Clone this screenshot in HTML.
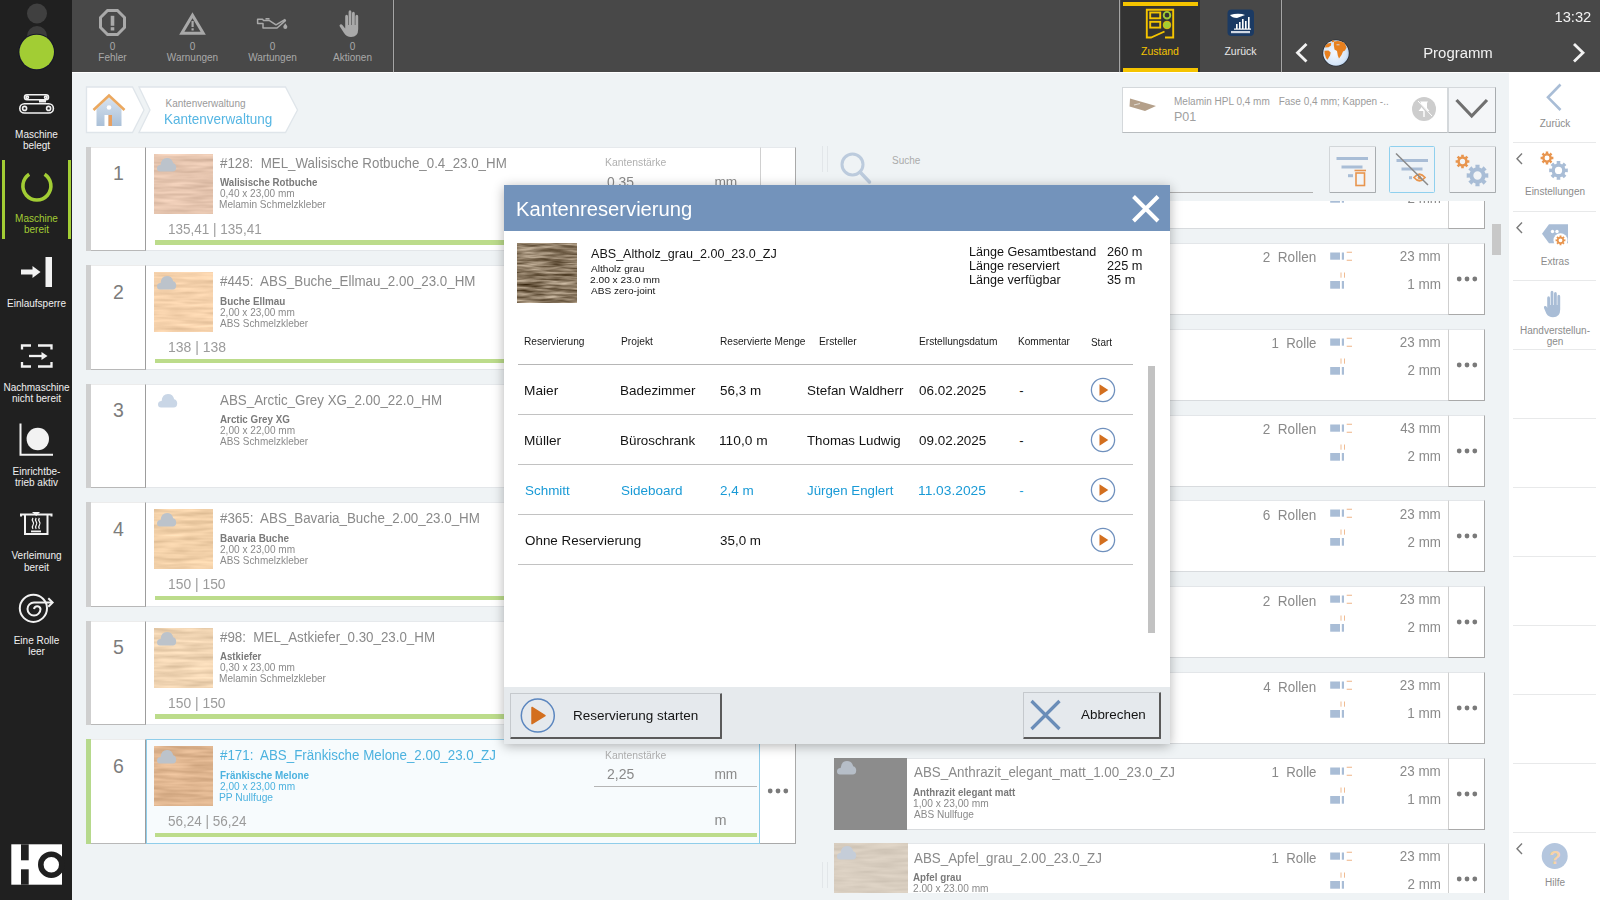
<!DOCTYPE html><html><head><meta charset="utf-8"><style>
html,body{margin:0;padding:0;width:1600px;height:900px;overflow:hidden;background:#eff3f5;}
body{position:relative;font-family:"Liberation Sans", sans-serif;}
.t{position:absolute;white-space:nowrap;}
svg{overflow:visible;}
</style></head><body>
<div style="position:absolute;left:72px;top:72px;width:1437px;height:828px;background:#eff3f5;"></div>
<div style="position:absolute;left:72px;top:72px;width:1437px;height:1px;background:#ffffff;"></div>
<div style="position:absolute;left:0px;top:0px;width:72px;height:900px;background:#202020;"></div>
<svg style="position:absolute;left:0px;top:0px;" width="72" height="75" viewBox="0 0 72 75">
<circle cx="37" cy="13.5" r="10" fill="#404040"/>
<circle cx="37" cy="36" r="10" fill="#3c3c3c"/>
<circle cx="36.7" cy="52" r="18.3" fill="#15152a"/>
<circle cx="36.7" cy="52" r="17.3" fill="#a2cd34"/>
</svg>
<svg style="position:absolute;left:0px;top:85px;" width="72" height="35" viewBox="0 0 72 35">
<g fill="none" stroke="#f2f2f2" stroke-width="1.6">
<rect x="24.5" y="9.8" width="24" height="5" rx="2.5"/>
<circle cx="27.3" cy="12.3" r="1.2"/><circle cx="45.7" cy="12.3" r="1.2"/>
<rect x="19.8" y="18.8" width="33.6" height="9.2" rx="4.6"/>
<circle cx="24.6" cy="23.4" r="2"/><circle cx="48.6" cy="23.4" r="2"/>
</g><rect x="39" y="14" width="7" height="3.5" fill="#f2f2f2"/>
</svg>
<div class="t" style="left:-163.50px;width:400px;text-align:center;top:130.03px;font-size:10px;line-height:10px;color:#f0f0f0;">Maschine</div>
<div class="t" style="left:-163.50px;width:400px;text-align:center;top:141.03px;font-size:10px;line-height:10px;color:#f0f0f0;">belegt</div>
<div style="position:absolute;left:1.8px;top:160px;width:3.3px;height:79.4px;background:#a2cd34;"></div>
<div style="position:absolute;left:67.8px;top:160px;width:3.1px;height:79.4px;background:#a2cd34;"></div>
<svg style="position:absolute;left:0px;top:150px;" width="72" height="60" viewBox="0 0 72 60">
<path d="M29.2 24.3 A14 14 0 1 0 44.6 24.3" fill="none" stroke="#a2cd34" stroke-width="3.6" stroke-linecap="butt"/>
</svg>
<div class="t" style="left:-163.50px;width:400px;text-align:center;top:213.94px;font-size:10px;line-height:10px;color:#a2cd34;">Maschine</div>
<div class="t" style="left:-163.50px;width:400px;text-align:center;top:225.34px;font-size:10px;line-height:10px;color:#a2cd34;">bereit</div>
<svg style="position:absolute;left:18px;top:254px;" width="38" height="36" viewBox="0 0 38 36">
<rect x="3" y="15.5" width="12.5" height="5" fill="#f2f2f2"/>
<path d="M14.5 12 L22.5 18 L14.5 24 Z" fill="#f2f2f2"/>
<rect x="27.5" y="3" width="6.5" height="30" fill="#f2f2f2"/>
</svg>
<div class="t" style="left:-163.50px;width:400px;text-align:center;top:298.54px;font-size:10px;line-height:10px;color:#f0f0f0;">Einlaufsperre</div>
<svg style="position:absolute;left:18px;top:342px;" width="38" height="28" viewBox="0 0 38 28">
<g fill="none" stroke="#f2f2f2" stroke-width="2.3">
<path d="M4 7.5 V3.5 H13"/><path d="M20 3.5 H33.5 V7.5"/>
<path d="M4 20 V24.5 H13"/><path d="M20 24.5 H33.5 V20"/>
<path d="M11 14 H26"/>
</g><path d="M23.5 10 L29.5 14 L23.5 18 Z" fill="#f2f2f2"/>
</svg>
<div class="t" style="left:-163.50px;width:400px;text-align:center;top:382.84px;font-size:10px;line-height:10px;color:#f0f0f0;">Nachmaschine</div>
<div class="t" style="left:-163.50px;width:400px;text-align:center;top:393.54px;font-size:10px;line-height:10px;color:#f0f0f0;">nicht bereit</div>
<svg style="position:absolute;left:18px;top:422px;" width="38" height="36" viewBox="0 0 38 36">
<path d="M2.5 1.5 V32.8 H35" fill="none" stroke="#f2f2f2" stroke-width="2"/>
<circle cx="19.8" cy="17" r="11.2" fill="#f2f2f2"/>
</svg>
<div class="t" style="left:-163.50px;width:400px;text-align:center;top:466.94px;font-size:10px;line-height:10px;color:#f0f0f0;">Einrichtbe-</div>
<div class="t" style="left:-163.50px;width:400px;text-align:center;top:478.24px;font-size:10px;line-height:10px;color:#f0f0f0;">trieb aktiv</div>
<svg style="position:absolute;left:0px;top:500px;" width="72" height="40" viewBox="0 0 72 40">
<g fill="none" stroke="#f2f2f2" stroke-width="2">
<path d="M21 16.5 V14.5 H51.5 V16.5"/><path d="M25 14.5 V34 H47.5 V14.5"/>
<path d="M33 18 q-1.4 1.8 0 3.6 q1.4 1.8 0 3.6 q-1.4 1.8 0 3.6" stroke-width="1.3"/>
<path d="M36.2 18 q-1.4 1.8 0 3.6 q1.4 1.8 0 3.6 q-1.4 1.8 0 3.6" stroke-width="1.3"/>
<path d="M39.4 18 q-1.4 1.8 0 3.6 q1.4 1.8 0 3.6 q-1.4 1.8 0 3.6" stroke-width="1.3"/>
</g>
<path d="M32 12 H40 L36.2 16 Z" fill="#f2f2f2"/>
<rect x="31" y="30.5" width="10" height="1.8" fill="#f2f2f2"/>
</svg>
<div class="t" style="left:-163.50px;width:400px;text-align:center;top:551.33px;font-size:10px;line-height:10px;color:#f0f0f0;">Verleimung</div>
<div class="t" style="left:-163.50px;width:400px;text-align:center;top:562.53px;font-size:10px;line-height:10px;color:#f0f0f0;">bereit</div>
<svg style="position:absolute;left:0px;top:572px;" width="72" height="60" viewBox="0 0 72 60">
<g fill="none" stroke="#f2f2f2" stroke-width="2">
<circle cx="33.4" cy="36.3" r="13.6"/>
<path d="M52 30.5 H34 A6.5 6.5 0 1 0 40.5 37 A3.3 3.3 0 0 0 34 37"/>
<path d="M48.3 26.3 L52.6 30.5 L48.3 34.7"/>
</g>
</svg>
<div class="t" style="left:-163.50px;width:400px;text-align:center;top:636.03px;font-size:10px;line-height:10px;color:#f0f0f0;">Eine Rolle</div>
<div class="t" style="left:-163.50px;width:400px;text-align:center;top:647.24px;font-size:10px;line-height:10px;color:#f0f0f0;">leer</div>
<svg style="position:absolute;left:0px;top:835px;" width="72" height="60" viewBox="0 0 72 60">
<rect x="11.3" y="9.3" width="50.7" height="40.4" fill="#ffffff"/>
<rect x="21" y="9.3" width="7.7" height="16" fill="#202020"/>
<rect x="21" y="34.3" width="7.7" height="15.4" fill="#202020"/>
<circle cx="51.3" cy="29.7" r="10.5" fill="none" stroke="#202020" stroke-width="5.6"/>
</svg>
<div style="position:absolute;left:72px;top:0px;width:1528px;height:72px;background:#484848;"></div>
<div style="position:absolute;left:392.5px;top:0px;width:1.3px;height:72px;background:#a5a5a5;box-shadow:0 0 1px #333;"></div>
<div style="position:absolute;left:1118.8px;top:0px;width:1.3px;height:72px;background:#a5a5a5;box-shadow:0 0 1px #333;"></div>
<div style="position:absolute;left:1281px;top:0px;width:1.3px;height:72px;background:#a5a5a5;box-shadow:0 0 1px #333;"></div>
<svg style="position:absolute;left:97px;top:7px;" width="31" height="31" viewBox="0 0 31 31">
<polygon points="20.47,3.5 27.5,10.53 27.5,20.47 20.47,27.5 10.53,27.5 3.5,20.47 3.5,10.53 10.53,3.5" fill="none" stroke="#a9a9a9" stroke-width="3"/>
<rect x="13.7" y="8.8" width="3.6" height="10" fill="#a9a9a9"/>
<rect x="13.7" y="20.2" width="3.6" height="3.3" fill="#a9a9a9"/>
</svg>
<div class="t" style="left:-87.50px;width:400px;text-align:center;top:41.53px;font-size:10px;line-height:10px;color:#a9a9a9;">0</div>
<div class="t" style="left:-87.50px;width:400px;text-align:center;top:52.53px;font-size:10px;line-height:10px;color:#a9a9a9;">Fehler</div>
<svg style="position:absolute;left:177px;top:9px;" width="32" height="29" viewBox="0 0 32 29">
<polygon points="15.5,6.2 26.2,24.2 4.8,24.2" fill="none" stroke="#a9a9a9" stroke-width="3" stroke-linejoin="miter"/>
<rect x="14.5" y="12" width="2.2" height="6" fill="#a9a9a9"/>
<rect x="14.5" y="19.3" width="2.2" height="2.2" fill="#a9a9a9"/>
</svg>
<div class="t" style="left:-7.50px;width:400px;text-align:center;top:41.53px;font-size:10px;line-height:10px;color:#a9a9a9;">0</div>
<div class="t" style="left:-7.50px;width:400px;text-align:center;top:52.53px;font-size:10px;line-height:10px;color:#a9a9a9;">Warnungen</div>
<svg style="position:absolute;left:255px;top:15px;" width="35" height="16" viewBox="0 0 35 16">
<path d="M2.6 4.2 H7.6 L8.6 5.6 H14.5 L21 9.8 L29.8 4.6 L30.4 5.6 L22 13 H8 V8.4 H2.6 Z" fill="none" stroke="#a9a9a9" stroke-width="1.5" stroke-linejoin="round"/>
<rect x="10.5" y="3" width="4" height="1.6" fill="#a9a9a9"/>
<path d="M30.3 8.3 q-2 2.6 -2 3.8 a2 2 0 0 0 4 0 q0 -1.2 -2 -3.8z" fill="#a9a9a9"/>
</svg>
<div class="t" style="left:72.50px;width:400px;text-align:center;top:41.53px;font-size:10px;line-height:10px;color:#a9a9a9;">0</div>
<div class="t" style="left:72.50px;width:400px;text-align:center;top:52.53px;font-size:10px;line-height:10px;color:#a9a9a9;">Wartungen</div>
<svg style="position:absolute;left:338px;top:8px;" width="27" height="31" viewBox="0 0 27 31">
<path d="M7.2 8.5 Q7.2 6.8 8.6 6.8 Q10 6.8 10 8.5 V17 H10.6 V4 Q10.6 2.2 12 2.2 Q13.4 2.2 13.4 4 V17 H14 V5.5 Q14 3.8 15.4 3.8 Q16.8 3.8 16.8 5.5 V17 H17.4 V8.5 Q17.4 6.8 18.8 6.8 Q20.2 6.8 20.2 8.5 V21 Q20.2 29 13 29 Q8.5 29 6 25 L1.8 18.5 Q1 17.2 2.2 16.5 Q3.4 15.8 4.4 17 L7.2 20.5 Z" fill="#a9a9a9"/>
</svg>
<div class="t" style="left:152.50px;width:400px;text-align:center;top:41.53px;font-size:10px;line-height:10px;color:#a9a9a9;">0</div>
<div class="t" style="left:152.50px;width:400px;text-align:center;top:52.53px;font-size:10px;line-height:10px;color:#a9a9a9;">Aktionen</div>
<div style="position:absolute;left:1120.5px;top:0px;width:79.5px;height:72px;background:#333333;"></div>
<div style="position:absolute;left:1123px;top:2px;width:75px;height:3.5px;background:#f5c400;"></div>
<div style="position:absolute;left:1123px;top:68px;width:75px;height:3.5px;background:#f5c400;"></div>
<svg style="position:absolute;left:1145px;top:8px;" width="30" height="31" viewBox="0 0 30 31">
<g fill="none" stroke="#f5c400" stroke-width="1.9">
<path d="M20 29.5 H28.2 V1.8 H1.8 V29.5 H6 L19.5 23.5"/>
<rect x="5.2" y="4.5" width="10" height="5.8"/>
<rect x="5.2" y="13.8" width="10" height="5.8"/>
<circle cx="22" cy="7.2" r="3.3" stroke="#a2cd34"/>
</g>
<circle cx="22" cy="17" r="3.8" fill="#a2cd34" stroke="#f5c400" stroke-width="0.8"/>
</svg>
<div class="t" style="left:960.00px;width:400px;text-align:center;top:46.41px;font-size:10.5px;line-height:10.5px;color:#f5c400;">Zustand</div>
<svg style="position:absolute;left:1227px;top:9px;" width="28" height="28" viewBox="0 0 28 28">
<rect x="0.5" y="0.5" width="26.5" height="26.5" rx="4" fill="#1b3a63"/>
<path d="M3 6 Q9 4 15 5 L18 6 L10 9 Q5 9 3 6z" fill="#ffffff"/>
<g fill="#ffffff"><rect x="9" y="15" width="1.6" height="5"/><rect x="12" y="13" width="1.6" height="7"/><rect x="15" y="10" width="1.6" height="10"/><rect x="18" y="12" width="1.6" height="8"/><rect x="21" y="8" width="1.6" height="12"/><rect x="7" y="19.5" width="17" height="1.2"/></g>
<rect x="4" y="22" width="19" height="2.2" fill="#d0d8e4"/>
</svg>
<div class="t" style="left:1040.50px;width:400px;text-align:center;top:46.41px;font-size:10.5px;line-height:10.5px;color:#e8e8e8;">Zurück</div>
<div class="t" style="right:8.70px;top:10.23px;font-size:14.5px;line-height:14.5px;color:#f2f2f2;transform:scaleX(1.0142);transform-origin:100% 0;">13:32</div>
<svg style="position:absolute;left:1294px;top:42px;" width="16" height="22" viewBox="0 0 16 22"><path d="M12.5 2 L3.5 10.8 L12.5 19.6" fill="none" stroke="#f2f2f2" stroke-width="2.8"/></svg>
<svg style="position:absolute;left:1571px;top:42px;" width="16" height="22" viewBox="0 0 16 22"><path d="M3 2 L12 10.8 L3 19.6" fill="none" stroke="#f2f2f2" stroke-width="2.8"/></svg>
<svg style="position:absolute;left:1321.5px;top:39px;" width="28" height="28" viewBox="0 0 28 28">
<defs><radialGradient id="gl" cx="0.45" cy="0.5" r="0.6"><stop offset="0" stop-color="#f4f8ff"/><stop offset="0.75" stop-color="#d6e6f8"/><stop offset="1" stop-color="#a9c6e8"/></radialGradient></defs>
<circle cx="14" cy="14" r="13.6" fill="#2a2f38"/>
<circle cx="14" cy="14" r="12.8" fill="url(#gl)"/>
<path d="M3.5 6.5 Q5.5 4 9.2 3.8 L9 6.5 L6.5 8.3 L3 8.6 Z" fill="#e8801e"/>
<path d="M9.8 1.5 L12.2 1.3 L11.8 3 L10 3.2 Z" fill="#e8801e"/>
<path d="M2.5 11.8 L6.5 11.5 L8.7 13.5 L8 16.5 L5.5 20.8 L4 19 L2.6 14.5 Z" fill="#e8801e"/>
<path d="M12 2.5 Q18 1.2 22.5 4 L24.5 8.5 L23 11.5 L21 12.5 L19.5 16 L17 19.5 L15.8 16.5 L15 12 L12.5 10.5 L11.8 6 Z" fill="#e8801e"/>
<path d="M14.5 5.8 L17.5 5.8" stroke="#cfe0f4" stroke-width="0.9"/>
</svg>
<div class="t" style="left:1257.50px;width:400px;text-align:center;top:45.18px;font-size:15.5px;line-height:15.5px;color:#f2f2f2;transform:scaleX(0.9624);transform-origin:50% 0;">Programm</div>
<svg style="position:absolute;left:84px;top:85px;" width="218" height="50" viewBox="0 0 218 50">
<path d="M2.5 2 H48.5 L60 25 L48.5 47.5 H2.5 Z" fill="#ffffff" stroke="#dfe5ea" stroke-width="1.3"/>
<path d="M55 2 H201.5 L213.5 25 L201.5 47.5 H55 L66 25 Z" fill="#ffffff" stroke="#dfe5ea" stroke-width="1.3"/>
<defs><linearGradient id="hw" x1="0" y1="0" x2="0" y2="1"><stop offset="0" stop-color="#d8e3ef"/><stop offset="1" stop-color="#aac0d8"/></linearGradient></defs>
<path d="M12.5 24 L25 12 L37.5 24 V41 H12.5 Z" fill="url(#hw)"/>
<path d="M9.5 25 L25 10.5 L40.5 25" fill="none" stroke="#eba85f" stroke-width="2.6"/>
<circle cx="25" cy="22.5" r="2.3" fill="#ffffff"/>
<rect x="20.5" y="30" width="4" height="11" fill="#ffffff"/>
<rect x="24.5" y="30" width="3.5" height="11" fill="#e8a060"/>
</svg>
<div class="t" style="left:165.50px;top:98.53px;font-size:10px;line-height:10px;color:#9a9a9a;">Kantenverwaltung</div>
<div class="t" style="left:164.42px;top:112.23px;font-size:14.5px;line-height:14.5px;color:#56b6e3;transform:scaleX(0.9321);transform-origin:0 0;">Kantenverwaltung</div>
<div style="position:absolute;left:1122px;top:87px;width:326px;height:45.5px;background:#ffffff;box-sizing:border-box;border:1px solid #d4d8db;border-bottom:1.5px solid #b8bcbf;"></div>
<div style="position:absolute;left:1448px;top:87px;width:47.5px;height:45.5px;background:#f4f6f8;box-sizing:border-box;border:1px solid #d4d8db;border-bottom:1.5px solid #a8acaf;border-right:1.5px solid #a8acaf;"></div>
<svg style="position:absolute;left:1128px;top:96px;" width="30" height="17" viewBox="0 0 30 17"><path d="M2 2.5 L28 10 L17 15 L1.5 10.6 Z" fill="#b4a08a"/><path d="M6 9 L12 7.5" stroke="#e0dad2" stroke-width="1.2"/></svg>
<div class="t" style="left:1174.00px;top:96.53px;font-size:10px;line-height:10px;color:#9c9c9c;">Melamin HPL 0,4 mm</div>
<div class="t" style="left:1278.70px;top:96.53px;font-size:10px;line-height:10px;color:#9c9c9c;">Fase 0,4 mm; Kappen -..</div>
<div class="t" style="left:1174.00px;top:110.92px;font-size:12.5px;line-height:12.5px;color:#a0a0a0;">P01</div>
<svg style="position:absolute;left:1411px;top:96px;" width="26" height="26" viewBox="0 0 26 26">
<circle cx="13" cy="13" r="12" fill="#cdcdcd"/>
<path d="M9 5.5 H17 L16 7 V12 L18.5 15 H7.5 L10 12 V7 Z" fill="#ffffff"/>
<rect x="12.3" y="15" width="1.4" height="6" fill="#ffffff"/>
<path d="M6 5 L20 20" stroke="#cdcdcd" stroke-width="2"/>
<path d="M7 5 L21 20" stroke="#ffffff" stroke-width="1"/>
</svg>
<svg style="position:absolute;left:1454px;top:97px;" width="36" height="25" viewBox="0 0 36 25"><path d="M2.5 3 L17.7 19 L33 3" fill="none" stroke="#707070" stroke-width="3.2"/></svg>
<div style="position:absolute;left:822px;top:146px;width:1px;height:26px;background:#e2e6e9;"></div>
<div style="position:absolute;left:827px;top:146px;width:1px;height:26px;background:#e2e6e9;"></div>
<svg style="position:absolute;left:838px;top:150px;" width="36" height="36" viewBox="0 0 36 36">
<circle cx="14.5" cy="14.5" r="10.5" fill="none" stroke="#bccbdd" stroke-width="3"/>
<path d="M22 22 L31.5 32" stroke="#bccbdd" stroke-width="3.5" stroke-linecap="round"/>
</svg>
<div class="t" style="left:892.00px;top:156.03px;font-size:10px;line-height:10px;color:#ababab;">Suche</div>
<div style="position:absolute;left:833px;top:192px;width:480px;height:1.3px;background:#b0b0b0;"></div>
<div style="position:absolute;left:1329px;top:146.4px;width:46.5px;height:46.4px;background:#f2f4f6;box-sizing:border-box;border:1px solid #d2d6d9;border-right:1.5px solid #a9adb0;border-bottom:1.5px solid #a9adb0;border-radius:1.5px;"></div>
<div style="position:absolute;left:1388.6px;top:146.4px;width:46.6px;height:46.4px;background:#eef3f7;box-sizing:border-box;border:1.5px solid #8fd0ee;border-radius:1.5px;"></div>
<div style="position:absolute;left:1449px;top:146.4px;width:46.5px;height:46.4px;background:#f2f4f6;box-sizing:border-box;border:1px solid #d2d6d9;border-right:1.5px solid #a9adb0;border-bottom:1.5px solid #a9adb0;border-radius:1.5px;"></div>
<svg style="position:absolute;left:1329px;top:146px;" width="47" height="47" viewBox="0 0 47 47">
<g fill="#a9bdd6"><rect x="7.5" y="11" width="31.5" height="3"/><rect x="12.5" y="19.5" width="21" height="3"/><rect x="19" y="28.2" width="5" height="3"/></g>
<g fill="none" stroke="#e8954e" stroke-width="1.6"><rect x="27" y="27" width="8.5" height="12.5"/><path d="M25.5 24.5 H37"/></g>
</svg>
<svg style="position:absolute;left:1389px;top:146px;" width="47" height="47" viewBox="0 0 47 47">
<g fill="#a9bdd6"><rect x="7.5" y="13" width="31.5" height="3"/><rect x="12.5" y="21.5" width="21" height="3"/><rect x="20" y="30.2" width="3" height="3"/></g>
<g fill="none" stroke="#e8954e" stroke-width="1.8"><path d="M25 31.5 Q30.5 25 36 31.5 Q30.5 38 25 31.5z"/></g>
<circle cx="30.5" cy="31.5" r="1.8" fill="#e8954e"/>
<path d="M7 7.5 L39 39" stroke="#8a8a8a" stroke-width="1.5"/>
</svg>
<svg style="position:absolute;left:1449px;top:146px;" width="47" height="47" viewBox="0 0 47 47"><path d="M18.29 13.52 L18.53 14.25 L20.37 14.13 L20.37 16.87 L18.53 16.75 L18.29 17.48 L17.94 18.17 L19.32 19.39 L17.39 21.32 L16.17 19.94 L15.48 20.29 L14.75 20.53 L14.87 22.37 L12.13 22.37 L12.25 20.53 L11.52 20.29 L10.83 19.94 L9.61 21.32 L7.68 19.39 L9.06 18.17 L8.71 17.48 L8.47 16.75 L6.63 16.87 L6.63 14.13 L8.47 14.25 L8.71 13.52 L9.06 12.83 L7.68 11.61 L9.61 9.68 L10.83 11.06 L11.52 10.71 L12.25 10.47 L12.13 8.63 L14.87 8.63 L14.75 10.47 L15.48 10.71 L16.17 11.06 L17.39 9.68 L19.32 11.61 L17.94 12.83 Z M16.16 15.50 A2.66 2.66 0 1 0 10.84 15.50 A2.66 2.66 0 1 0 16.16 15.50 Z" fill="#e8954e" fill-rule="evenodd"/><path d="M36.02 26.38 L36.40 27.54 L39.29 27.35 L39.29 31.65 L36.40 31.46 L36.02 32.62 L35.47 33.70 L37.65 35.61 L34.61 38.65 L32.70 36.47 L31.62 37.02 L30.46 37.40 L30.65 40.29 L26.35 40.29 L26.54 37.40 L25.38 37.02 L24.30 36.47 L22.39 38.65 L19.35 35.61 L21.53 33.70 L20.98 32.62 L20.60 31.46 L17.71 31.65 L17.71 27.35 L20.60 27.54 L20.98 26.38 L21.53 25.30 L19.35 23.39 L22.39 20.35 L24.30 22.53 L25.38 21.98 L26.54 21.60 L26.35 18.71 L30.65 18.71 L30.46 21.60 L31.62 21.98 L32.70 22.53 L34.61 20.35 L37.65 23.39 L35.47 25.30 Z M32.68 29.50 A4.18 4.18 0 1 0 24.32 29.50 A4.18 4.18 0 1 0 32.68 29.50 Z" fill="#a9bdd6" fill-rule="evenodd"/></svg>
<div style="position:absolute;left:86.3px;top:146.5px;width:4.6px;height:104.5px;background:#cfcfcf;"></div>
<div style="position:absolute;left:90.9px;top:146.5px;width:54.8px;height:104.5px;background:#ffffff;box-sizing:border-box;border-right:1.3px solid #9d9d9d;border-bottom:1.8px solid #b8b8b8;border-top:1px solid #ececec;"></div>
<div class="t" style="left:-81.70px;width:400px;text-align:center;top:164.29px;font-size:19.5px;line-height:19.5px;color:#7c7c7c;">1</div>
<div style="position:absolute;left:146px;top:146.5px;width:613.5px;height:104.5px;background:#ffffff;box-sizing:border-box;border-top:1px solid #e6e9ec;border-bottom:1.3px solid #e3e6e9;"></div>
<div style="position:absolute;left:759.5px;top:146.5px;width:36.2px;height:104.5px;background:#ffffff;box-sizing:border-box;border-top:1px solid #e6e9ec;border-right:1.3px solid #a9a9a9;border-bottom:1.3px solid #a9a9a9;border-left:1px solid #d0d0d0;"></div>
<svg style="position:absolute;left:767px;top:194.1px;" width="22" height="8" viewBox="0 0 22 8"><circle cx="3.2" cy="4" r="2.4" fill="#7a7a7a"/><circle cx="11" cy="4" r="2.4" fill="#7a7a7a"/><circle cx="18.8" cy="4" r="2.4" fill="#7a7a7a"/></svg>
<svg style="position:absolute;left:154px;top:153.5px;" width="59" height="59.3" viewBox="0 0 59 59.3"><filter id="wf1" x="0" y="0" width="100%" height="100%" color-interpolation-filters="sRGB">
<feTurbulence type="fractalNoise" baseFrequency="0.03 0.25" numOctaves="2" seed="5"/>
<feColorMatrix type="matrix" values="0.22 0 0 0 0.788  0.22 0 0 0 0.659  0.22 0 0 0 0.572  0 0 0 0 1"/></filter>
<rect x="0" y="0" width="59" height="59.3" filter="url(#wf1)"/></svg>
<svg style="position:absolute;left:157px;top:156.5px;" width="20" height="16" viewBox="0 0 20 16"><path d="M3 14.5 Q0 14.5 0 11.3 Q0 8.2 3.6 8 Q4.2 1 10 1 Q15 1 16.2 6.2 Q19.2 6.8 19.2 10.6 Q19.2 14.5 15.6 14.5 Z" fill="#bcc3cb"/></svg>
<div class="t" style="left:220.30px;top:155.75px;font-size:14px;line-height:14px;color:#8a8a8a;transform:scaleX(0.9512);transform-origin:0 0;">#128:&nbsp; MEL_Walisische Rotbuche_0.4_23.0_HM</div>
<div class="t" style="left:220.30px;top:177.41px;font-size:10.5px;line-height:10.5px;color:#7a7a7a;font-weight:bold;transform:scaleX(0.9247);transform-origin:0 0;">Walisische Rotbuche</div>
<div class="t" style="left:219.95px;top:188.21px;font-size:10.5px;line-height:10.5px;color:#8a8a8a;transform:scaleX(0.9550);transform-origin:0 0;">0,40 x 23,00 mm</div>
<div class="t" style="left:219.49px;top:199.21px;font-size:10.5px;line-height:10.5px;color:#8a8a8a;transform:scaleX(0.9596);transform-origin:0 0;">Melamin Schmelzkleber</div>
<div class="t" style="left:167.59px;top:221.75px;font-size:14px;line-height:14px;color:#9b9b9b;transform:scaleX(0.9650);transform-origin:0 0;">135,41&nbsp;|&nbsp;135,41</div>
<div style="position:absolute;left:155px;top:240.2px;width:601.5px;height:4.5px;background:#bcdc8b;"></div>
<div class="t" style="right:873.40px;top:220.95px;font-size:14px;line-height:14px;color:#8a8a8a;transform:scaleX(1.0334);transform-origin:100% 0;">m</div>
<div class="t" style="left:605.17px;top:158.03px;font-size:10px;line-height:10px;color:#b0b0b0;transform:scaleX(1.0399);transform-origin:0 0;">Kantenstärke</div>
<div class="t" style="left:607.11px;top:174.65px;font-size:14px;line-height:14px;color:#8a8a8a;transform:scaleX(0.9931);transform-origin:0 0;">0,35</div>
<div class="t" style="right:862.40px;top:174.65px;font-size:14px;line-height:14px;color:#8a8a8a;transform:scaleX(0.9833);transform-origin:100% 0;">mm</div>
<div style="position:absolute;left:593.6px;top:193.1px;width:163px;height:1.5px;background:#b5b5b5;"></div>
<div style="position:absolute;left:86.3px;top:265.0px;width:4.6px;height:104.5px;background:#cfcfcf;"></div>
<div style="position:absolute;left:90.9px;top:265.0px;width:54.8px;height:104.5px;background:#ffffff;box-sizing:border-box;border-right:1.3px solid #9d9d9d;border-bottom:1.8px solid #b8b8b8;border-top:1px solid #ececec;"></div>
<div class="t" style="left:-81.70px;width:400px;text-align:center;top:282.79px;font-size:19.5px;line-height:19.5px;color:#7c7c7c;">2</div>
<div style="position:absolute;left:146px;top:265.0px;width:613.5px;height:104.5px;background:#ffffff;box-sizing:border-box;border-top:1px solid #e6e9ec;border-bottom:1.3px solid #e3e6e9;"></div>
<div style="position:absolute;left:759.5px;top:265.0px;width:36.2px;height:104.5px;background:#ffffff;box-sizing:border-box;border-top:1px solid #e6e9ec;border-right:1.3px solid #a9a9a9;border-bottom:1.3px solid #a9a9a9;border-left:1px solid #d0d0d0;"></div>
<svg style="position:absolute;left:767px;top:312.6px;" width="22" height="8" viewBox="0 0 22 8"><circle cx="3.2" cy="4" r="2.4" fill="#7a7a7a"/><circle cx="11" cy="4" r="2.4" fill="#7a7a7a"/><circle cx="18.8" cy="4" r="2.4" fill="#7a7a7a"/></svg>
<svg style="position:absolute;left:154px;top:272.0px;" width="59" height="59.3" viewBox="0 0 59 59.3"><filter id="wf2" x="0" y="0" width="100%" height="100%" color-interpolation-filters="sRGB">
<feTurbulence type="fractalNoise" baseFrequency="0.03 0.25" numOctaves="2" seed="10"/>
<feColorMatrix type="matrix" values="0.22 0 0 0 0.851  0.22 0 0 0 0.710  0.22 0 0 0 0.561  0 0 0 0 1"/></filter>
<rect x="0" y="0" width="59" height="59.3" filter="url(#wf2)"/></svg>
<svg style="position:absolute;left:157px;top:275.0px;" width="20" height="16" viewBox="0 0 20 16"><path d="M3 14.5 Q0 14.5 0 11.3 Q0 8.2 3.6 8 Q4.2 1 10 1 Q15 1 16.2 6.2 Q19.2 6.8 19.2 10.6 Q19.2 14.5 15.6 14.5 Z" fill="#bcc3cb"/></svg>
<div class="t" style="left:220.30px;top:274.25px;font-size:14px;line-height:14px;color:#8a8a8a;transform:scaleX(0.9541);transform-origin:0 0;">#445:&nbsp; ABS_Buche_Ellmau_2.00_23.0_HM</div>
<div class="t" style="left:219.66px;top:295.91px;font-size:10.5px;line-height:10.5px;color:#7a7a7a;font-weight:bold;transform:scaleX(0.9406);transform-origin:0 0;">Buche Ellmau</div>
<div class="t" style="left:219.80px;top:306.71px;font-size:10.5px;line-height:10.5px;color:#8a8a8a;transform:scaleX(0.9569);transform-origin:0 0;">2,00 x 23,00 mm</div>
<div class="t" style="left:220.30px;top:317.71px;font-size:10.5px;line-height:10.5px;color:#8a8a8a;transform:scaleX(0.9497);transform-origin:0 0;">ABS Schmelzkleber</div>
<div class="t" style="left:167.55px;top:340.25px;font-size:14px;line-height:14px;color:#9b9b9b;transform:scaleX(0.9984);transform-origin:0 0;">138&nbsp;|&nbsp;138</div>
<div style="position:absolute;left:155px;top:358.7px;width:601.5px;height:4.5px;background:#bcdc8b;"></div>
<div class="t" style="right:873.40px;top:339.45px;font-size:14px;line-height:14px;color:#8a8a8a;transform:scaleX(1.0334);transform-origin:100% 0;">m</div>
<div class="t" style="left:605.17px;top:276.54px;font-size:10px;line-height:10px;color:#b0b0b0;transform:scaleX(1.0399);transform-origin:0 0;">Kantenstärke</div>
<div class="t" style="left:606.90px;top:293.15px;font-size:14px;line-height:14px;color:#8a8a8a;transform:scaleX(0.9985);transform-origin:0 0;">2,00</div>
<div class="t" style="right:862.40px;top:293.15px;font-size:14px;line-height:14px;color:#8a8a8a;transform:scaleX(0.9833);transform-origin:100% 0;">mm</div>
<div style="position:absolute;left:593.6px;top:311.6px;width:163px;height:1.5px;background:#b5b5b5;"></div>
<div style="position:absolute;left:86.3px;top:383.5px;width:4.6px;height:104.5px;background:#cfcfcf;"></div>
<div style="position:absolute;left:90.9px;top:383.5px;width:54.8px;height:104.5px;background:#ffffff;box-sizing:border-box;border-right:1.3px solid #9d9d9d;border-bottom:1.8px solid #b8b8b8;border-top:1px solid #ececec;"></div>
<div class="t" style="left:-81.70px;width:400px;text-align:center;top:401.29px;font-size:19.5px;line-height:19.5px;color:#7c7c7c;">3</div>
<div style="position:absolute;left:146px;top:383.5px;width:613.5px;height:104.5px;background:#ffffff;box-sizing:border-box;border-top:1px solid #e6e9ec;border-bottom:1.3px solid #e3e6e9;"></div>
<div style="position:absolute;left:759.5px;top:383.5px;width:36.2px;height:104.5px;background:#ffffff;box-sizing:border-box;border-top:1px solid #e6e9ec;border-right:1.3px solid #a9a9a9;border-bottom:1.3px solid #a9a9a9;border-left:1px solid #d0d0d0;"></div>
<svg style="position:absolute;left:767px;top:431.1px;" width="22" height="8" viewBox="0 0 22 8"><circle cx="3.2" cy="4" r="2.4" fill="#7a7a7a"/><circle cx="11" cy="4" r="2.4" fill="#7a7a7a"/><circle cx="18.8" cy="4" r="2.4" fill="#7a7a7a"/></svg>
<svg style="position:absolute;left:157.5px;top:393.0px;" width="20" height="16" viewBox="0 0 20 16"><path d="M3 14.5 Q0 14.5 0 11.3 Q0 8.2 3.6 8 Q4.2 1 10 1 Q15 1 16.2 6.2 Q19.2 6.8 19.2 10.6 Q19.2 14.5 15.6 14.5 Z" fill="#c9d6e6"/></svg>
<div class="t" style="left:220.30px;top:392.75px;font-size:14px;line-height:14px;color:#8a8a8a;transform:scaleX(0.9544);transform-origin:0 0;">ABS_Arctic_Grey XG_2.00_22.0_HM</div>
<div class="t" style="left:220.05px;top:414.41px;font-size:10.5px;line-height:10.5px;color:#7a7a7a;font-weight:bold;transform:scaleX(0.9348);transform-origin:0 0;">Arctic Grey XG</div>
<div class="t" style="left:219.80px;top:425.21px;font-size:10.5px;line-height:10.5px;color:#8a8a8a;transform:scaleX(0.9608);transform-origin:0 0;">2,00 x 22,00 mm</div>
<div class="t" style="left:220.30px;top:436.21px;font-size:10.5px;line-height:10.5px;color:#8a8a8a;transform:scaleX(0.9497);transform-origin:0 0;">ABS Schmelzkleber</div>
<div class="t" style="left:605.17px;top:395.04px;font-size:10px;line-height:10px;color:#b0b0b0;transform:scaleX(1.0399);transform-origin:0 0;">Kantenstärke</div>
<div class="t" style="left:606.90px;top:411.65px;font-size:14px;line-height:14px;color:#8a8a8a;transform:scaleX(0.9985);transform-origin:0 0;">2,00</div>
<div class="t" style="right:862.40px;top:411.65px;font-size:14px;line-height:14px;color:#8a8a8a;transform:scaleX(0.9833);transform-origin:100% 0;">mm</div>
<div style="position:absolute;left:593.6px;top:430.1px;width:163px;height:1.5px;background:#b5b5b5;"></div>
<div style="position:absolute;left:86.3px;top:502.0px;width:4.6px;height:104.5px;background:#cfcfcf;"></div>
<div style="position:absolute;left:90.9px;top:502.0px;width:54.8px;height:104.5px;background:#ffffff;box-sizing:border-box;border-right:1.3px solid #9d9d9d;border-bottom:1.8px solid #b8b8b8;border-top:1px solid #ececec;"></div>
<div class="t" style="left:-81.70px;width:400px;text-align:center;top:519.79px;font-size:19.5px;line-height:19.5px;color:#7c7c7c;">4</div>
<div style="position:absolute;left:146px;top:502.0px;width:613.5px;height:104.5px;background:#ffffff;box-sizing:border-box;border-top:1px solid #e6e9ec;border-bottom:1.3px solid #e3e6e9;"></div>
<div style="position:absolute;left:759.5px;top:502.0px;width:36.2px;height:104.5px;background:#ffffff;box-sizing:border-box;border-top:1px solid #e6e9ec;border-right:1.3px solid #a9a9a9;border-bottom:1.3px solid #a9a9a9;border-left:1px solid #d0d0d0;"></div>
<svg style="position:absolute;left:767px;top:549.6px;" width="22" height="8" viewBox="0 0 22 8"><circle cx="3.2" cy="4" r="2.4" fill="#7a7a7a"/><circle cx="11" cy="4" r="2.4" fill="#7a7a7a"/><circle cx="18.8" cy="4" r="2.4" fill="#7a7a7a"/></svg>
<svg style="position:absolute;left:154px;top:509.0px;" width="59" height="59.3" viewBox="0 0 59 59.3"><filter id="wf3" x="0" y="0" width="100%" height="100%" color-interpolation-filters="sRGB">
<feTurbulence type="fractalNoise" baseFrequency="0.03 0.25" numOctaves="2" seed="15"/>
<feColorMatrix type="matrix" values="0.22 0 0 0 0.831  0.22 0 0 0 0.698  0.22 0 0 0 0.541  0 0 0 0 1"/></filter>
<rect x="0" y="0" width="59" height="59.3" filter="url(#wf3)"/></svg>
<svg style="position:absolute;left:157px;top:512.0px;" width="20" height="16" viewBox="0 0 20 16"><path d="M3 14.5 Q0 14.5 0 11.3 Q0 8.2 3.6 8 Q4.2 1 10 1 Q15 1 16.2 6.2 Q19.2 6.8 19.2 10.6 Q19.2 14.5 15.6 14.5 Z" fill="#bcc3cb"/></svg>
<div class="t" style="left:220.30px;top:511.25px;font-size:14px;line-height:14px;color:#8a8a8a;transform:scaleX(0.9539);transform-origin:0 0;">#365:&nbsp; ABS_Bavaria_Buche_2.00_23.0_HM</div>
<div class="t" style="left:219.65px;top:532.91px;font-size:10.5px;line-height:10.5px;color:#7a7a7a;font-weight:bold;transform:scaleX(0.9454);transform-origin:0 0;">Bavaria Buche</div>
<div class="t" style="left:219.80px;top:543.71px;font-size:10.5px;line-height:10.5px;color:#8a8a8a;transform:scaleX(0.9608);transform-origin:0 0;">2,00 x 23,00 mm</div>
<div class="t" style="left:220.30px;top:554.71px;font-size:10.5px;line-height:10.5px;color:#8a8a8a;transform:scaleX(0.9497);transform-origin:0 0;">ABS Schmelzkleber</div>
<div class="t" style="left:167.56px;top:577.25px;font-size:14px;line-height:14px;color:#9b9b9b;transform:scaleX(0.9901);transform-origin:0 0;">150&nbsp;|&nbsp;150</div>
<div style="position:absolute;left:155px;top:595.7px;width:601.5px;height:4.5px;background:#bcdc8b;"></div>
<div class="t" style="right:873.40px;top:576.45px;font-size:14px;line-height:14px;color:#8a8a8a;transform:scaleX(1.0334);transform-origin:100% 0;">m</div>
<div class="t" style="left:605.17px;top:513.53px;font-size:10px;line-height:10px;color:#b0b0b0;transform:scaleX(1.0399);transform-origin:0 0;">Kantenstärke</div>
<div class="t" style="left:606.90px;top:530.15px;font-size:14px;line-height:14px;color:#8a8a8a;transform:scaleX(0.9985);transform-origin:0 0;">2,00</div>
<div class="t" style="right:862.40px;top:530.15px;font-size:14px;line-height:14px;color:#8a8a8a;transform:scaleX(0.9833);transform-origin:100% 0;">mm</div>
<div style="position:absolute;left:593.6px;top:548.6px;width:163px;height:1.5px;background:#b5b5b5;"></div>
<div style="position:absolute;left:86.3px;top:620.5px;width:4.6px;height:104.5px;background:#cfcfcf;"></div>
<div style="position:absolute;left:90.9px;top:620.5px;width:54.8px;height:104.5px;background:#ffffff;box-sizing:border-box;border-right:1.3px solid #9d9d9d;border-bottom:1.8px solid #b8b8b8;border-top:1px solid #ececec;"></div>
<div class="t" style="left:-81.70px;width:400px;text-align:center;top:638.29px;font-size:19.5px;line-height:19.5px;color:#7c7c7c;">5</div>
<div style="position:absolute;left:146px;top:620.5px;width:613.5px;height:104.5px;background:#ffffff;box-sizing:border-box;border-top:1px solid #e6e9ec;border-bottom:1.3px solid #e3e6e9;"></div>
<div style="position:absolute;left:759.5px;top:620.5px;width:36.2px;height:104.5px;background:#ffffff;box-sizing:border-box;border-top:1px solid #e6e9ec;border-right:1.3px solid #a9a9a9;border-bottom:1.3px solid #a9a9a9;border-left:1px solid #d0d0d0;"></div>
<svg style="position:absolute;left:767px;top:668.1px;" width="22" height="8" viewBox="0 0 22 8"><circle cx="3.2" cy="4" r="2.4" fill="#7a7a7a"/><circle cx="11" cy="4" r="2.4" fill="#7a7a7a"/><circle cx="18.8" cy="4" r="2.4" fill="#7a7a7a"/></svg>
<svg style="position:absolute;left:154px;top:627.5px;" width="59" height="59.3" viewBox="0 0 59 59.3"><filter id="wf4" x="0" y="0" width="100%" height="100%" color-interpolation-filters="sRGB">
<feTurbulence type="fractalNoise" baseFrequency="0.03 0.25" numOctaves="2" seed="20"/>
<feColorMatrix type="matrix" values="0.22 0 0 0 0.831  0.22 0 0 0 0.721  0.22 0 0 0 0.588  0 0 0 0 1"/></filter>
<rect x="0" y="0" width="59" height="59.3" filter="url(#wf4)"/></svg>
<svg style="position:absolute;left:157px;top:630.5px;" width="20" height="16" viewBox="0 0 20 16"><path d="M3 14.5 Q0 14.5 0 11.3 Q0 8.2 3.6 8 Q4.2 1 10 1 Q15 1 16.2 6.2 Q19.2 6.8 19.2 10.6 Q19.2 14.5 15.6 14.5 Z" fill="#bcc3cb"/></svg>
<div class="t" style="left:220.30px;top:629.75px;font-size:14px;line-height:14px;color:#8a8a8a;transform:scaleX(0.9527);transform-origin:0 0;">#98:&nbsp; MEL_Astkiefer_0.30_23.0_HM</div>
<div class="t" style="left:220.06px;top:651.41px;font-size:10.5px;line-height:10.5px;color:#7a7a7a;font-weight:bold;transform:scaleX(0.9209);transform-origin:0 0;">Astkiefer</div>
<div class="t" style="left:219.95px;top:662.21px;font-size:10.5px;line-height:10.5px;color:#8a8a8a;transform:scaleX(0.9589);transform-origin:0 0;">0,30 x 23,00 mm</div>
<div class="t" style="left:219.49px;top:673.21px;font-size:10.5px;line-height:10.5px;color:#8a8a8a;transform:scaleX(0.9596);transform-origin:0 0;">Melamin Schmelzkleber</div>
<div class="t" style="left:167.56px;top:695.75px;font-size:14px;line-height:14px;color:#9b9b9b;transform:scaleX(0.9901);transform-origin:0 0;">150&nbsp;|&nbsp;150</div>
<div style="position:absolute;left:155px;top:714.2px;width:601.5px;height:4.5px;background:#bcdc8b;"></div>
<div class="t" style="right:873.40px;top:694.95px;font-size:14px;line-height:14px;color:#8a8a8a;transform:scaleX(1.0334);transform-origin:100% 0;">m</div>
<div class="t" style="left:605.17px;top:632.03px;font-size:10px;line-height:10px;color:#b0b0b0;transform:scaleX(1.0399);transform-origin:0 0;">Kantenstärke</div>
<div class="t" style="left:607.11px;top:648.65px;font-size:14px;line-height:14px;color:#8a8a8a;transform:scaleX(0.9905);transform-origin:0 0;">0,30</div>
<div class="t" style="right:862.40px;top:648.65px;font-size:14px;line-height:14px;color:#8a8a8a;transform:scaleX(0.9833);transform-origin:100% 0;">mm</div>
<div style="position:absolute;left:593.6px;top:667.1px;width:163px;height:1.5px;background:#b5b5b5;"></div>
<div style="position:absolute;left:86.3px;top:739.0px;width:4.6px;height:104.5px;background:#b6d98c;"></div>
<div style="position:absolute;left:90.9px;top:739.0px;width:54.8px;height:104.5px;background:#ffffff;box-sizing:border-box;border-right:1.3px solid #9d9d9d;border-bottom:1.8px solid #b8b8b8;border-top:1px solid #ececec;"></div>
<div class="t" style="left:-81.70px;width:400px;text-align:center;top:756.79px;font-size:19.5px;line-height:19.5px;color:#7c7c7c;">6</div>
<div style="position:absolute;left:146px;top:739.0px;width:613.5px;height:104.5px;background:#f7fbfd;box-sizing:border-box;border:1.3px solid #8fcdea;"></div>
<div style="position:absolute;left:759.5px;top:739.0px;width:36.2px;height:104.5px;background:#ffffff;box-sizing:border-box;border-top:1px solid #e6e9ec;border-right:1.3px solid #a9a9a9;border-bottom:1.3px solid #a9a9a9;"></div>
<svg style="position:absolute;left:767px;top:786.6px;" width="22" height="8" viewBox="0 0 22 8"><circle cx="3.2" cy="4" r="2.4" fill="#7a7a7a"/><circle cx="11" cy="4" r="2.4" fill="#7a7a7a"/><circle cx="18.8" cy="4" r="2.4" fill="#7a7a7a"/></svg>
<svg style="position:absolute;left:154px;top:746.0px;" width="59" height="59.3" viewBox="0 0 59 59.3"><filter id="wf5" x="0" y="0" width="100%" height="100%" color-interpolation-filters="sRGB">
<feTurbulence type="fractalNoise" baseFrequency="0.03 0.25" numOctaves="2" seed="25"/>
<feColorMatrix type="matrix" values="0.22 0 0 0 0.765  0.22 0 0 0 0.600  0.22 0 0 0 0.451  0 0 0 0 1"/></filter>
<rect x="0" y="0" width="59" height="59.3" filter="url(#wf5)"/></svg>
<svg style="position:absolute;left:157px;top:749.0px;" width="20" height="16" viewBox="0 0 20 16"><path d="M3 14.5 Q0 14.5 0 11.3 Q0 8.2 3.6 8 Q4.2 1 10 1 Q15 1 16.2 6.2 Q19.2 6.8 19.2 10.6 Q19.2 14.5 15.6 14.5 Z" fill="#bcc3cb"/></svg>
<div class="t" style="left:220.30px;top:748.25px;font-size:14px;line-height:14px;color:#4cb2df;transform:scaleX(0.9531);transform-origin:0 0;">#171:&nbsp; ABS_Fränkische Melone_2.00_23.0_ZJ</div>
<div class="t" style="left:219.66px;top:769.91px;font-size:10.5px;line-height:10.5px;color:#4cb2df;font-weight:bold;transform:scaleX(0.9412);transform-origin:0 0;">Fränkische Melone</div>
<div class="t" style="left:219.80px;top:780.71px;font-size:10.5px;line-height:10.5px;color:#4cb2df;transform:scaleX(0.9608);transform-origin:0 0;">2,00 x 23,00 mm</div>
<div class="t" style="left:219.48px;top:791.71px;font-size:10.5px;line-height:10.5px;color:#4cb2df;transform:scaleX(0.9783);transform-origin:0 0;">PP Nullfuge</div>
<div class="t" style="left:168.06px;top:814.25px;font-size:14px;line-height:14px;color:#9b9b9b;transform:scaleX(0.9644);transform-origin:0 0;">56,24&nbsp;|&nbsp;56,24</div>
<div style="position:absolute;left:155px;top:832.7px;width:601.5px;height:4.5px;background:#bcdc8b;"></div>
<div class="t" style="right:873.40px;top:813.45px;font-size:14px;line-height:14px;color:#8a8a8a;transform:scaleX(1.0334);transform-origin:100% 0;">m</div>
<div class="t" style="left:605.17px;top:750.53px;font-size:10px;line-height:10px;color:#b0b0b0;transform:scaleX(1.0399);transform-origin:0 0;">Kantenstärke</div>
<div class="t" style="left:606.90px;top:767.15px;font-size:14px;line-height:14px;color:#8a8a8a;transform:scaleX(1.0012);transform-origin:0 0;">2,25</div>
<div class="t" style="right:862.40px;top:767.15px;font-size:14px;line-height:14px;color:#8a8a8a;transform:scaleX(0.9833);transform-origin:100% 0;">mm</div>
<div style="position:absolute;left:593.6px;top:785.6px;width:163px;height:1.5px;background:#b5b5b5;"></div>
<div style="position:absolute;left:820px;top:200.5px;width:689px;height:692.5px;overflow:hidden;">
<div style="position:absolute;left:13.600000000000023px;top:-44.0px;width:614.4px;height:72px;background:#ffffff;box-sizing:border-box;border-top:1px solid #e3e6e9;border-bottom:1.3px solid #d8dbde;"></div>
<div style="position:absolute;left:628px;top:-44.0px;width:36.5px;height:72px;background:#ffffff;box-sizing:border-box;border-top:1px solid #e3e6e9;border-left:1px solid #cfcfcf;border-right:1.3px solid #a9a9a9;border-bottom:1.3px solid #a9a9a9;"></div>
<div style="position:absolute;left:13.600000000000023px;top:-44.0px;width:73.4px;height:72px;background:#f2f2f2;"></div>
<svg style="position:absolute;left:17.299999999999955px;top:-42.0px;" width="22" height="18" viewBox="0 0 22 18"><path d="M3 14.5 Q0 14.5 0 11.3 Q0 8.2 3.6 8 Q4.2 1 10 1 Q15 1 16.2 6.2 Q19.2 6.8 19.2 10.6 Q19.2 14.5 15.6 14.5 Z" fill="#b9c2cc"/></svg>
<div class="t" style="left:93.50px;top:-36.45px;font-size:14px;line-height:14px;color:#8a8a8a;">ABS_Weiss_2.00_23.0_ZJ</div>
<div class="t" style="left:93.50px;top:-14.89px;font-size:10.5px;line-height:10.5px;color:#7a7a7a;font-weight:bold;">Weiss</div>
<div class="t" style="left:92.99px;top:-3.89px;font-size:10.5px;line-height:10.5px;color:#8a8a8a;transform:scaleX(0.9660);transform-origin:0 0;">2,00 x 23,00 mm</div>
<div class="t" style="left:93.50px;top:7.71px;font-size:10.5px;line-height:10.5px;color:#8a8a8a;transform:scaleX(0.9596);transform-origin:0 0;">ABS Nullfuge</div>
<div class="t" style="right:193.00px;top:-36.45px;font-size:14px;line-height:14px;color:#8a8a8a;transform:scaleX(0.9685);transform-origin:100% 0;">2&nbsp; Rollen</div>
<svg style="position:absolute;left:509px;top:-36.0px;" width="26" height="40" viewBox="0 0 26 40">
<rect x="1.2" y="1.5" width="9.8" height="7.2" fill="#a9bdd6"/><rect x="12.8" y="1.5" width="2.2" height="7.2" fill="#a9bdd6"/>
<path d="M17.7 1.2 H23 M17.7 9.3 H23" stroke="#eeb487" stroke-width="1.1"/>
<rect x="1.2" y="30" width="9.8" height="7.7" fill="#a9bdd6"/><rect x="12.8" y="30" width="2.2" height="7.7" fill="#a9bdd6"/>
<path d="M12 21.5 V26.7 M15.5 21.5 V26.7" stroke="#eeb487" stroke-width="0.9"/>
</svg>
<div class="t" style="right:68.50px;top:-37.55px;font-size:14px;line-height:14px;color:#8a8a8a;transform:scaleX(0.9580);transform-origin:100% 0;">23 mm</div>
<div class="t" style="right:68.50px;top:-9.55px;font-size:14px;line-height:14px;color:#8a8a8a;transform:scaleX(0.9554);transform-origin:100% 0;">2 mm</div>
<svg style="position:absolute;left:635.5px;top:-12.0px;" width="22" height="8" viewBox="0 0 22 8"><circle cx="3.2" cy="4" r="2.4" fill="#7a7a7a"/><circle cx="11" cy="4" r="2.4" fill="#7a7a7a"/><circle cx="18.8" cy="4" r="2.4" fill="#7a7a7a"/></svg>
<div style="position:absolute;left:13.600000000000023px;top:42.0px;width:614.4px;height:72px;background:#ffffff;box-sizing:border-box;border-top:1px solid #e3e6e9;border-bottom:1.3px solid #d8dbde;"></div>
<div style="position:absolute;left:628px;top:42.0px;width:36.5px;height:72px;background:#ffffff;box-sizing:border-box;border-top:1px solid #e3e6e9;border-left:1px solid #cfcfcf;border-right:1.3px solid #a9a9a9;border-bottom:1.3px solid #a9a9a9;"></div>
<div style="position:absolute;left:13.600000000000023px;top:42.0px;width:73.4px;height:72px;background:#d9c2a5;"></div>
<svg style="position:absolute;left:17.299999999999955px;top:44.0px;" width="22" height="18" viewBox="0 0 22 18"><path d="M3 14.5 Q0 14.5 0 11.3 Q0 8.2 3.6 8 Q4.2 1 10 1 Q15 1 16.2 6.2 Q19.2 6.8 19.2 10.6 Q19.2 14.5 15.6 14.5 Z" fill="#b9c2cc"/></svg>
<div class="t" style="left:93.50px;top:49.55px;font-size:14px;line-height:14px;color:#8a8a8a;">ABS_Eiche_2.00_23.0_ZJ</div>
<div class="t" style="left:93.50px;top:71.11px;font-size:10.5px;line-height:10.5px;color:#7a7a7a;font-weight:bold;">Eiche</div>
<div class="t" style="left:92.99px;top:82.11px;font-size:10.5px;line-height:10.5px;color:#8a8a8a;transform:scaleX(0.9660);transform-origin:0 0;">2,00 x 23,00 mm</div>
<div class="t" style="left:93.50px;top:93.71px;font-size:10.5px;line-height:10.5px;color:#8a8a8a;transform:scaleX(0.9596);transform-origin:0 0;">ABS Nullfuge</div>
<div class="t" style="right:193.00px;top:49.55px;font-size:14px;line-height:14px;color:#8a8a8a;transform:scaleX(0.9685);transform-origin:100% 0;">2&nbsp; Rollen</div>
<svg style="position:absolute;left:509px;top:50.0px;" width="26" height="40" viewBox="0 0 26 40">
<rect x="1.2" y="1.5" width="9.8" height="7.2" fill="#a9bdd6"/><rect x="12.8" y="1.5" width="2.2" height="7.2" fill="#a9bdd6"/>
<path d="M17.7 1.2 H23 M17.7 9.3 H23" stroke="#eeb487" stroke-width="1.1"/>
<rect x="1.2" y="30" width="9.8" height="7.7" fill="#a9bdd6"/><rect x="12.8" y="30" width="2.2" height="7.7" fill="#a9bdd6"/>
<path d="M12 21.5 V26.7 M15.5 21.5 V26.7" stroke="#eeb487" stroke-width="0.9"/>
</svg>
<div class="t" style="right:68.50px;top:48.45px;font-size:14px;line-height:14px;color:#8a8a8a;transform:scaleX(0.9580);transform-origin:100% 0;">23 mm</div>
<div class="t" style="right:68.50px;top:76.45px;font-size:14px;line-height:14px;color:#8a8a8a;transform:scaleX(0.9655);transform-origin:100% 0;">1 mm</div>
<svg style="position:absolute;left:635.5px;top:74.0px;" width="22" height="8" viewBox="0 0 22 8"><circle cx="3.2" cy="4" r="2.4" fill="#7a7a7a"/><circle cx="11" cy="4" r="2.4" fill="#7a7a7a"/><circle cx="18.8" cy="4" r="2.4" fill="#7a7a7a"/></svg>
<div style="position:absolute;left:13.600000000000023px;top:128.0px;width:614.4px;height:72px;background:#ffffff;box-sizing:border-box;border-top:1px solid #e3e6e9;border-bottom:1.3px solid #d8dbde;"></div>
<div style="position:absolute;left:628px;top:128.0px;width:36.5px;height:72px;background:#ffffff;box-sizing:border-box;border-top:1px solid #e3e6e9;border-left:1px solid #cfcfcf;border-right:1.3px solid #a9a9a9;border-bottom:1.3px solid #a9a9a9;"></div>
<div style="position:absolute;left:13.600000000000023px;top:128.0px;width:73.4px;height:72px;background:#d9c2a5;"></div>
<svg style="position:absolute;left:17.299999999999955px;top:130.0px;" width="22" height="18" viewBox="0 0 22 18"><path d="M3 14.5 Q0 14.5 0 11.3 Q0 8.2 3.6 8 Q4.2 1 10 1 Q15 1 16.2 6.2 Q19.2 6.8 19.2 10.6 Q19.2 14.5 15.6 14.5 Z" fill="#b9c2cc"/></svg>
<div class="t" style="left:93.50px;top:135.55px;font-size:14px;line-height:14px;color:#8a8a8a;">ABS_Eiche_2.00_23.0_ZJ</div>
<div class="t" style="left:93.50px;top:157.11px;font-size:10.5px;line-height:10.5px;color:#7a7a7a;font-weight:bold;">Eiche</div>
<div class="t" style="left:92.99px;top:168.11px;font-size:10.5px;line-height:10.5px;color:#8a8a8a;transform:scaleX(0.9660);transform-origin:0 0;">2,00 x 23,00 mm</div>
<div class="t" style="left:93.50px;top:179.71px;font-size:10.5px;line-height:10.5px;color:#8a8a8a;transform:scaleX(0.9596);transform-origin:0 0;">ABS Nullfuge</div>
<div class="t" style="right:193.00px;top:135.55px;font-size:14px;line-height:14px;color:#8a8a8a;transform:scaleX(0.9466);transform-origin:100% 0;">1&nbsp; Rolle</div>
<svg style="position:absolute;left:509px;top:136.0px;" width="26" height="40" viewBox="0 0 26 40">
<rect x="1.2" y="1.5" width="9.8" height="7.2" fill="#a9bdd6"/><rect x="12.8" y="1.5" width="2.2" height="7.2" fill="#a9bdd6"/>
<path d="M17.7 1.2 H23 M17.7 9.3 H23" stroke="#eeb487" stroke-width="1.1"/>
<rect x="1.2" y="30" width="9.8" height="7.7" fill="#a9bdd6"/><rect x="12.8" y="30" width="2.2" height="7.7" fill="#a9bdd6"/>
<path d="M12 21.5 V26.7 M15.5 21.5 V26.7" stroke="#eeb487" stroke-width="0.9"/>
</svg>
<div class="t" style="right:68.50px;top:134.45px;font-size:14px;line-height:14px;color:#8a8a8a;transform:scaleX(0.9580);transform-origin:100% 0;">23 mm</div>
<div class="t" style="right:68.50px;top:162.45px;font-size:14px;line-height:14px;color:#8a8a8a;transform:scaleX(0.9554);transform-origin:100% 0;">2 mm</div>
<svg style="position:absolute;left:635.5px;top:160.0px;" width="22" height="8" viewBox="0 0 22 8"><circle cx="3.2" cy="4" r="2.4" fill="#7a7a7a"/><circle cx="11" cy="4" r="2.4" fill="#7a7a7a"/><circle cx="18.8" cy="4" r="2.4" fill="#7a7a7a"/></svg>
<div style="position:absolute;left:13.600000000000023px;top:214.0px;width:614.4px;height:72px;background:#ffffff;box-sizing:border-box;border-top:1px solid #e3e6e9;border-bottom:1.3px solid #d8dbde;"></div>
<div style="position:absolute;left:628px;top:214.0px;width:36.5px;height:72px;background:#ffffff;box-sizing:border-box;border-top:1px solid #e3e6e9;border-left:1px solid #cfcfcf;border-right:1.3px solid #a9a9a9;border-bottom:1.3px solid #a9a9a9;"></div>
<div style="position:absolute;left:13.600000000000023px;top:214.0px;width:73.4px;height:72px;background:#d9c2a5;"></div>
<svg style="position:absolute;left:17.299999999999955px;top:216.0px;" width="22" height="18" viewBox="0 0 22 18"><path d="M3 14.5 Q0 14.5 0 11.3 Q0 8.2 3.6 8 Q4.2 1 10 1 Q15 1 16.2 6.2 Q19.2 6.8 19.2 10.6 Q19.2 14.5 15.6 14.5 Z" fill="#b9c2cc"/></svg>
<div class="t" style="left:93.50px;top:221.55px;font-size:14px;line-height:14px;color:#8a8a8a;">ABS_Eiche_2.00_23.0_ZJ</div>
<div class="t" style="left:93.50px;top:243.11px;font-size:10.5px;line-height:10.5px;color:#7a7a7a;font-weight:bold;">Eiche</div>
<div class="t" style="left:92.99px;top:254.11px;font-size:10.5px;line-height:10.5px;color:#8a8a8a;transform:scaleX(0.9660);transform-origin:0 0;">2,00 x 23,00 mm</div>
<div class="t" style="left:93.50px;top:265.71px;font-size:10.5px;line-height:10.5px;color:#8a8a8a;transform:scaleX(0.9596);transform-origin:0 0;">ABS Nullfuge</div>
<div class="t" style="right:193.00px;top:221.55px;font-size:14px;line-height:14px;color:#8a8a8a;transform:scaleX(0.9685);transform-origin:100% 0;">2&nbsp; Rollen</div>
<svg style="position:absolute;left:509px;top:222.0px;" width="26" height="40" viewBox="0 0 26 40">
<rect x="1.2" y="1.5" width="9.8" height="7.2" fill="#a9bdd6"/><rect x="12.8" y="1.5" width="2.2" height="7.2" fill="#a9bdd6"/>
<path d="M17.7 1.2 H23 M17.7 9.3 H23" stroke="#eeb487" stroke-width="1.1"/>
<rect x="1.2" y="30" width="9.8" height="7.7" fill="#a9bdd6"/><rect x="12.8" y="30" width="2.2" height="7.7" fill="#a9bdd6"/>
<path d="M12 21.5 V26.7 M15.5 21.5 V26.7" stroke="#eeb487" stroke-width="0.9"/>
</svg>
<div class="t" style="right:68.50px;top:220.45px;font-size:14px;line-height:14px;color:#8a8a8a;transform:scaleX(0.9484);transform-origin:100% 0;">43 mm</div>
<div class="t" style="right:68.50px;top:248.45px;font-size:14px;line-height:14px;color:#8a8a8a;transform:scaleX(0.9554);transform-origin:100% 0;">2 mm</div>
<svg style="position:absolute;left:635.5px;top:246.0px;" width="22" height="8" viewBox="0 0 22 8"><circle cx="3.2" cy="4" r="2.4" fill="#7a7a7a"/><circle cx="11" cy="4" r="2.4" fill="#7a7a7a"/><circle cx="18.8" cy="4" r="2.4" fill="#7a7a7a"/></svg>
<div style="position:absolute;left:13.600000000000023px;top:299.8px;width:614.4px;height:72px;background:#ffffff;box-sizing:border-box;border-top:1px solid #e3e6e9;border-bottom:1.3px solid #d8dbde;"></div>
<div style="position:absolute;left:628px;top:299.8px;width:36.5px;height:72px;background:#ffffff;box-sizing:border-box;border-top:1px solid #e3e6e9;border-left:1px solid #cfcfcf;border-right:1.3px solid #a9a9a9;border-bottom:1.3px solid #a9a9a9;"></div>
<div style="position:absolute;left:13.600000000000023px;top:299.8px;width:73.4px;height:72px;background:#d9c2a5;"></div>
<svg style="position:absolute;left:17.299999999999955px;top:301.8px;" width="22" height="18" viewBox="0 0 22 18"><path d="M3 14.5 Q0 14.5 0 11.3 Q0 8.2 3.6 8 Q4.2 1 10 1 Q15 1 16.2 6.2 Q19.2 6.8 19.2 10.6 Q19.2 14.5 15.6 14.5 Z" fill="#b9c2cc"/></svg>
<div class="t" style="left:93.50px;top:307.35px;font-size:14px;line-height:14px;color:#8a8a8a;">ABS_Eiche_2.00_23.0_ZJ</div>
<div class="t" style="left:93.50px;top:328.91px;font-size:10.5px;line-height:10.5px;color:#7a7a7a;font-weight:bold;">Eiche</div>
<div class="t" style="left:92.99px;top:339.91px;font-size:10.5px;line-height:10.5px;color:#8a8a8a;transform:scaleX(0.9660);transform-origin:0 0;">2,00 x 23,00 mm</div>
<div class="t" style="left:93.50px;top:351.51px;font-size:10.5px;line-height:10.5px;color:#8a8a8a;transform:scaleX(0.9596);transform-origin:0 0;">ABS Nullfuge</div>
<div class="t" style="right:193.00px;top:307.35px;font-size:14px;line-height:14px;color:#8a8a8a;transform:scaleX(0.9685);transform-origin:100% 0;">6&nbsp; Rollen</div>
<svg style="position:absolute;left:509px;top:307.8px;" width="26" height="40" viewBox="0 0 26 40">
<rect x="1.2" y="1.5" width="9.8" height="7.2" fill="#a9bdd6"/><rect x="12.8" y="1.5" width="2.2" height="7.2" fill="#a9bdd6"/>
<path d="M17.7 1.2 H23 M17.7 9.3 H23" stroke="#eeb487" stroke-width="1.1"/>
<rect x="1.2" y="30" width="9.8" height="7.7" fill="#a9bdd6"/><rect x="12.8" y="30" width="2.2" height="7.7" fill="#a9bdd6"/>
<path d="M12 21.5 V26.7 M15.5 21.5 V26.7" stroke="#eeb487" stroke-width="0.9"/>
</svg>
<div class="t" style="right:68.50px;top:306.25px;font-size:14px;line-height:14px;color:#8a8a8a;transform:scaleX(0.9580);transform-origin:100% 0;">23 mm</div>
<div class="t" style="right:68.50px;top:334.25px;font-size:14px;line-height:14px;color:#8a8a8a;transform:scaleX(0.9554);transform-origin:100% 0;">2 mm</div>
<svg style="position:absolute;left:635.5px;top:331.8px;" width="22" height="8" viewBox="0 0 22 8"><circle cx="3.2" cy="4" r="2.4" fill="#7a7a7a"/><circle cx="11" cy="4" r="2.4" fill="#7a7a7a"/><circle cx="18.8" cy="4" r="2.4" fill="#7a7a7a"/></svg>
<div style="position:absolute;left:13.600000000000023px;top:385.5px;width:614.4px;height:72px;background:#ffffff;box-sizing:border-box;border-top:1px solid #e3e6e9;border-bottom:1.3px solid #d8dbde;"></div>
<div style="position:absolute;left:628px;top:385.5px;width:36.5px;height:72px;background:#ffffff;box-sizing:border-box;border-top:1px solid #e3e6e9;border-left:1px solid #cfcfcf;border-right:1.3px solid #a9a9a9;border-bottom:1.3px solid #a9a9a9;"></div>
<div style="position:absolute;left:13.600000000000023px;top:385.5px;width:73.4px;height:72px;background:#d9c2a5;"></div>
<svg style="position:absolute;left:17.299999999999955px;top:387.5px;" width="22" height="18" viewBox="0 0 22 18"><path d="M3 14.5 Q0 14.5 0 11.3 Q0 8.2 3.6 8 Q4.2 1 10 1 Q15 1 16.2 6.2 Q19.2 6.8 19.2 10.6 Q19.2 14.5 15.6 14.5 Z" fill="#b9c2cc"/></svg>
<div class="t" style="left:93.50px;top:393.05px;font-size:14px;line-height:14px;color:#8a8a8a;">ABS_Eiche_2.00_23.0_ZJ</div>
<div class="t" style="left:93.50px;top:414.61px;font-size:10.5px;line-height:10.5px;color:#7a7a7a;font-weight:bold;">Eiche</div>
<div class="t" style="left:92.99px;top:425.61px;font-size:10.5px;line-height:10.5px;color:#8a8a8a;transform:scaleX(0.9660);transform-origin:0 0;">2,00 x 23,00 mm</div>
<div class="t" style="left:93.50px;top:437.21px;font-size:10.5px;line-height:10.5px;color:#8a8a8a;transform:scaleX(0.9596);transform-origin:0 0;">ABS Nullfuge</div>
<div class="t" style="right:193.00px;top:393.05px;font-size:14px;line-height:14px;color:#8a8a8a;transform:scaleX(0.9685);transform-origin:100% 0;">2&nbsp; Rollen</div>
<svg style="position:absolute;left:509px;top:393.5px;" width="26" height="40" viewBox="0 0 26 40">
<rect x="1.2" y="1.5" width="9.8" height="7.2" fill="#a9bdd6"/><rect x="12.8" y="1.5" width="2.2" height="7.2" fill="#a9bdd6"/>
<path d="M17.7 1.2 H23 M17.7 9.3 H23" stroke="#eeb487" stroke-width="1.1"/>
<rect x="1.2" y="30" width="9.8" height="7.7" fill="#a9bdd6"/><rect x="12.8" y="30" width="2.2" height="7.7" fill="#a9bdd6"/>
<path d="M12 21.5 V26.7 M15.5 21.5 V26.7" stroke="#eeb487" stroke-width="0.9"/>
</svg>
<div class="t" style="right:68.50px;top:391.95px;font-size:14px;line-height:14px;color:#8a8a8a;transform:scaleX(0.9580);transform-origin:100% 0;">23 mm</div>
<div class="t" style="right:68.50px;top:419.95px;font-size:14px;line-height:14px;color:#8a8a8a;transform:scaleX(0.9554);transform-origin:100% 0;">2 mm</div>
<svg style="position:absolute;left:635.5px;top:417.5px;" width="22" height="8" viewBox="0 0 22 8"><circle cx="3.2" cy="4" r="2.4" fill="#7a7a7a"/><circle cx="11" cy="4" r="2.4" fill="#7a7a7a"/><circle cx="18.8" cy="4" r="2.4" fill="#7a7a7a"/></svg>
<div style="position:absolute;left:13.600000000000023px;top:471.5px;width:614.4px;height:72px;background:#ffffff;box-sizing:border-box;border-top:1px solid #e3e6e9;border-bottom:1.3px solid #d8dbde;"></div>
<div style="position:absolute;left:628px;top:471.5px;width:36.5px;height:72px;background:#ffffff;box-sizing:border-box;border-top:1px solid #e3e6e9;border-left:1px solid #cfcfcf;border-right:1.3px solid #a9a9a9;border-bottom:1.3px solid #a9a9a9;"></div>
<div style="position:absolute;left:13.600000000000023px;top:471.5px;width:73.4px;height:72px;background:#d9c2a5;"></div>
<svg style="position:absolute;left:17.299999999999955px;top:473.5px;" width="22" height="18" viewBox="0 0 22 18"><path d="M3 14.5 Q0 14.5 0 11.3 Q0 8.2 3.6 8 Q4.2 1 10 1 Q15 1 16.2 6.2 Q19.2 6.8 19.2 10.6 Q19.2 14.5 15.6 14.5 Z" fill="#b9c2cc"/></svg>
<div class="t" style="left:93.50px;top:479.05px;font-size:14px;line-height:14px;color:#8a8a8a;">ABS_Eiche_2.00_23.0_ZJ</div>
<div class="t" style="left:93.50px;top:500.61px;font-size:10.5px;line-height:10.5px;color:#7a7a7a;font-weight:bold;">Eiche</div>
<div class="t" style="left:92.99px;top:511.61px;font-size:10.5px;line-height:10.5px;color:#8a8a8a;transform:scaleX(0.9660);transform-origin:0 0;">2,00 x 23,00 mm</div>
<div class="t" style="left:93.50px;top:523.21px;font-size:10.5px;line-height:10.5px;color:#8a8a8a;transform:scaleX(0.9596);transform-origin:0 0;">ABS Nullfuge</div>
<div class="t" style="right:193.00px;top:479.05px;font-size:14px;line-height:14px;color:#8a8a8a;transform:scaleX(0.9610);transform-origin:100% 0;">4&nbsp; Rollen</div>
<svg style="position:absolute;left:509px;top:479.5px;" width="26" height="40" viewBox="0 0 26 40">
<rect x="1.2" y="1.5" width="9.8" height="7.2" fill="#a9bdd6"/><rect x="12.8" y="1.5" width="2.2" height="7.2" fill="#a9bdd6"/>
<path d="M17.7 1.2 H23 M17.7 9.3 H23" stroke="#eeb487" stroke-width="1.1"/>
<rect x="1.2" y="30" width="9.8" height="7.7" fill="#a9bdd6"/><rect x="12.8" y="30" width="2.2" height="7.7" fill="#a9bdd6"/>
<path d="M12 21.5 V26.7 M15.5 21.5 V26.7" stroke="#eeb487" stroke-width="0.9"/>
</svg>
<div class="t" style="right:68.50px;top:477.95px;font-size:14px;line-height:14px;color:#8a8a8a;transform:scaleX(0.9580);transform-origin:100% 0;">23 mm</div>
<div class="t" style="right:68.50px;top:505.95px;font-size:14px;line-height:14px;color:#8a8a8a;transform:scaleX(0.9655);transform-origin:100% 0;">1 mm</div>
<svg style="position:absolute;left:635.5px;top:503.5px;" width="22" height="8" viewBox="0 0 22 8"><circle cx="3.2" cy="4" r="2.4" fill="#7a7a7a"/><circle cx="11" cy="4" r="2.4" fill="#7a7a7a"/><circle cx="18.8" cy="4" r="2.4" fill="#7a7a7a"/></svg>
<div style="position:absolute;left:13.600000000000023px;top:557.0px;width:614.4px;height:72px;background:#ffffff;box-sizing:border-box;border-top:1px solid #e3e6e9;border-bottom:1.3px solid #d8dbde;"></div>
<div style="position:absolute;left:628px;top:557.0px;width:36.5px;height:72px;background:#ffffff;box-sizing:border-box;border-top:1px solid #e3e6e9;border-left:1px solid #cfcfcf;border-right:1.3px solid #a9a9a9;border-bottom:1.3px solid #a9a9a9;"></div>
<div style="position:absolute;left:13.600000000000023px;top:557.0px;width:73.4px;height:72px;background:#8c8c8c;"></div>
<svg style="position:absolute;left:17.299999999999955px;top:559.0px;" width="22" height="18" viewBox="0 0 22 18"><path d="M3 14.5 Q0 14.5 0 11.3 Q0 8.2 3.6 8 Q4.2 1 10 1 Q15 1 16.2 6.2 Q19.2 6.8 19.2 10.6 Q19.2 14.5 15.6 14.5 Z" fill="#b6bec8"/></svg>
<div class="t" style="left:93.50px;top:564.55px;font-size:14px;line-height:14px;color:#8a8a8a;transform:scaleX(0.9551);transform-origin:0 0;">ABS_Anthrazit_elegant_matt_1.00_23.0_ZJ</div>
<div class="t" style="left:93.26px;top:586.11px;font-size:10.5px;line-height:10.5px;color:#7a7a7a;font-weight:bold;transform:scaleX(0.9278);transform-origin:0 0;">Anthrazit elegant matt</div>
<div class="t" style="left:92.74px;top:597.11px;font-size:10.5px;line-height:10.5px;color:#8a8a8a;transform:scaleX(0.9693);transform-origin:0 0;">1,00 x 23,00 mm</div>
<div class="t" style="left:93.50px;top:608.71px;font-size:10.5px;line-height:10.5px;color:#8a8a8a;transform:scaleX(0.9596);transform-origin:0 0;">ABS Nullfuge</div>
<div class="t" style="right:193.00px;top:564.55px;font-size:14px;line-height:14px;color:#8a8a8a;transform:scaleX(0.9466);transform-origin:100% 0;">1&nbsp; Rolle</div>
<svg style="position:absolute;left:509px;top:565.0px;" width="26" height="40" viewBox="0 0 26 40">
<rect x="1.2" y="1.5" width="9.8" height="7.2" fill="#a9bdd6"/><rect x="12.8" y="1.5" width="2.2" height="7.2" fill="#a9bdd6"/>
<path d="M17.7 1.2 H23 M17.7 9.3 H23" stroke="#eeb487" stroke-width="1.1"/>
<rect x="1.2" y="30" width="9.8" height="7.7" fill="#a9bdd6"/><rect x="12.8" y="30" width="2.2" height="7.7" fill="#a9bdd6"/>
<path d="M12 21.5 V26.7 M15.5 21.5 V26.7" stroke="#eeb487" stroke-width="0.9"/>
</svg>
<div class="t" style="right:68.50px;top:563.45px;font-size:14px;line-height:14px;color:#8a8a8a;transform:scaleX(0.9580);transform-origin:100% 0;">23 mm</div>
<div class="t" style="right:68.50px;top:591.45px;font-size:14px;line-height:14px;color:#8a8a8a;transform:scaleX(0.9655);transform-origin:100% 0;">1 mm</div>
<svg style="position:absolute;left:635.5px;top:589.0px;" width="22" height="8" viewBox="0 0 22 8"><circle cx="3.2" cy="4" r="2.4" fill="#7a7a7a"/><circle cx="11" cy="4" r="2.4" fill="#7a7a7a"/><circle cx="18.8" cy="4" r="2.4" fill="#7a7a7a"/></svg>
<div style="position:absolute;left:13.600000000000023px;top:642.5px;width:614.4px;height:72px;background:#ffffff;box-sizing:border-box;border-top:1px solid #e3e6e9;border-bottom:1.3px solid #d8dbde;"></div>
<div style="position:absolute;left:628px;top:642.5px;width:36.5px;height:72px;background:#ffffff;box-sizing:border-box;border-top:1px solid #e3e6e9;border-left:1px solid #cfcfcf;border-right:1.3px solid #a9a9a9;border-bottom:1.3px solid #a9a9a9;"></div>
<svg style="position:absolute;left:13.600000000000023px;top:642.5px;" width="73.4" height="72" viewBox="0 0 73.4 72"><filter id="wf6" x="0" y="0" width="100%" height="100%" color-interpolation-filters="sRGB">
<feTurbulence type="fractalNoise" baseFrequency="0.03 0.25" numOctaves="2" seed="30"/>
<feColorMatrix type="matrix" values="0.12 0 0 0 0.787  0.12 0 0 0 0.744  0.12 0 0 0 0.689  0 0 0 0 1"/></filter>
<rect x="0" y="0" width="73.4" height="72" filter="url(#wf6)"/></svg>
<svg style="position:absolute;left:17.299999999999955px;top:644.5px;" width="22" height="18" viewBox="0 0 22 18"><path d="M3 14.5 Q0 14.5 0 11.3 Q0 8.2 3.6 8 Q4.2 1 10 1 Q15 1 16.2 6.2 Q19.2 6.8 19.2 10.6 Q19.2 14.5 15.6 14.5 Z" fill="#c5cdd8"/></svg>
<div class="t" style="left:93.50px;top:650.05px;font-size:14px;line-height:14px;color:#8a8a8a;transform:scaleX(0.9544);transform-origin:0 0;">ABS_Apfel_grau_2.00_23.0_ZJ</div>
<div class="t" style="left:93.25px;top:671.61px;font-size:10.5px;line-height:10.5px;color:#7a7a7a;font-weight:bold;transform:scaleX(0.9337);transform-origin:0 0;">Apfel grau</div>
<div class="t" style="left:92.99px;top:682.61px;font-size:10.5px;line-height:10.5px;color:#8a8a8a;transform:scaleX(0.9660);transform-origin:0 0;">2.00 x 23.00 mm</div>
<div class="t" style="left:93.50px;top:694.21px;font-size:10.5px;line-height:10.5px;color:#8a8a8a;transform:scaleX(0.9596);transform-origin:0 0;">ABS Nullfuge</div>
<div class="t" style="right:193.00px;top:650.05px;font-size:14px;line-height:14px;color:#8a8a8a;transform:scaleX(0.9466);transform-origin:100% 0;">1&nbsp; Rolle</div>
<svg style="position:absolute;left:509px;top:650.5px;" width="26" height="40" viewBox="0 0 26 40">
<rect x="1.2" y="1.5" width="9.8" height="7.2" fill="#a9bdd6"/><rect x="12.8" y="1.5" width="2.2" height="7.2" fill="#a9bdd6"/>
<path d="M17.7 1.2 H23 M17.7 9.3 H23" stroke="#eeb487" stroke-width="1.1"/>
<rect x="1.2" y="30" width="9.8" height="7.7" fill="#a9bdd6"/><rect x="12.8" y="30" width="2.2" height="7.7" fill="#a9bdd6"/>
<path d="M12 21.5 V26.7 M15.5 21.5 V26.7" stroke="#eeb487" stroke-width="0.9"/>
</svg>
<div class="t" style="right:68.50px;top:648.95px;font-size:14px;line-height:14px;color:#8a8a8a;transform:scaleX(0.9580);transform-origin:100% 0;">23 mm</div>
<div class="t" style="right:68.50px;top:676.95px;font-size:14px;line-height:14px;color:#8a8a8a;transform:scaleX(0.9554);transform-origin:100% 0;">2 mm</div>
<svg style="position:absolute;left:635.5px;top:674.5px;" width="22" height="8" viewBox="0 0 22 8"><circle cx="3.2" cy="4" r="2.4" fill="#7a7a7a"/><circle cx="11" cy="4" r="2.4" fill="#7a7a7a"/><circle cx="18.8" cy="4" r="2.4" fill="#7a7a7a"/></svg>
</div>
<div style="position:absolute;left:1492px;top:224px;width:8.5px;height:30.5px;background:#c8c8c8;"></div>
<div style="position:absolute;left:822px;top:862px;width:1px;height:26px;background:#e2e6e9;"></div>
<div style="position:absolute;left:827px;top:862px;width:1px;height:26px;background:#e2e6e9;"></div>
<div style="position:absolute;left:1509px;top:72px;width:91px;height:828px;background:#ffffff;"></div>
<div style="position:absolute;left:1513px;top:141.6px;width:83px;height:1.2px;background:#e8e9ea;"></div>
<div style="position:absolute;left:1513px;top:210.6px;width:83px;height:1.2px;background:#e8e9ea;"></div>
<div style="position:absolute;left:1513px;top:279.6px;width:83px;height:1.2px;background:#e8e9ea;"></div>
<div style="position:absolute;left:1513px;top:348.6px;width:83px;height:1.2px;background:#e8e9ea;"></div>
<div style="position:absolute;left:1513px;top:417.6px;width:83px;height:1.2px;background:#e8e9ea;"></div>
<div style="position:absolute;left:1513px;top:486.6px;width:83px;height:1.2px;background:#e8e9ea;"></div>
<div style="position:absolute;left:1513px;top:555.6px;width:83px;height:1.2px;background:#e8e9ea;"></div>
<div style="position:absolute;left:1513px;top:624.6px;width:83px;height:1.2px;background:#e8e9ea;"></div>
<div style="position:absolute;left:1513px;top:693.6px;width:83px;height:1.2px;background:#e8e9ea;"></div>
<div style="position:absolute;left:1513px;top:762.6px;width:83px;height:1.2px;background:#e8e9ea;"></div>
<div style="position:absolute;left:1513px;top:831.6px;width:83px;height:1.2px;background:#e8e9ea;"></div>
<svg style="position:absolute;left:1543px;top:82px;" width="24" height="30" viewBox="0 0 24 30"><path d="M17.5 2.5 L5 15.3 L17.5 28" fill="none" stroke="#a9bdd6" stroke-width="2.6"/></svg>
<div class="t" style="left:1355.00px;width:400px;text-align:center;top:119.03px;font-size:10px;line-height:10px;color:#8c8c8c;">Zurück</div>
<svg style="position:absolute;left:1515px;top:151.5px;" width="10" height="14" viewBox="0 0 10 14"><path d="M7 1.5 L2 6.8 L7 12" fill="none" stroke="#7a7a7a" stroke-width="1.4"/></svg>
<svg style="position:absolute;left:1530px;top:145px;" width="45" height="40" viewBox="0 0 45 40"><path d="M21.44 11.16 L21.67 11.84 L23.38 11.73 L23.38 14.27 L21.67 14.16 L21.44 14.84 L21.12 15.48 L22.40 16.61 L20.61 18.40 L19.48 17.12 L18.84 17.44 L18.16 17.67 L18.27 19.38 L15.73 19.38 L15.84 17.67 L15.16 17.44 L14.52 17.12 L13.39 18.40 L11.60 16.61 L12.88 15.48 L12.56 14.84 L12.33 14.16 L10.62 14.27 L10.62 11.73 L12.33 11.84 L12.56 11.16 L12.88 10.52 L11.60 9.39 L13.39 7.60 L14.52 8.88 L15.16 8.56 L15.84 8.33 L15.73 6.62 L18.27 6.62 L18.16 8.33 L18.84 8.56 L19.48 8.88 L20.61 7.60 L22.40 9.39 L21.12 10.52 Z M19.47 13.00 A2.47 2.47 0 1 0 14.53 13.00 A2.47 2.47 0 1 0 19.47 13.00 Z" fill="#e8954e" fill-rule="evenodd"/><path d="M34.99 22.71 L35.32 23.71 L37.82 23.55 L37.82 27.25 L35.32 27.09 L34.99 28.09 L34.52 29.03 L36.40 30.68 L33.78 33.30 L32.13 31.42 L31.19 31.89 L30.19 32.22 L30.35 34.72 L26.65 34.72 L26.81 32.22 L25.81 31.89 L24.87 31.42 L23.22 33.30 L20.60 30.68 L22.48 29.03 L22.01 28.09 L21.68 27.09 L19.18 27.25 L19.18 23.55 L21.68 23.71 L22.01 22.71 L22.48 21.77 L20.60 20.12 L23.22 17.50 L24.87 19.38 L25.81 18.91 L26.81 18.58 L26.65 16.08 L30.35 16.08 L30.19 18.58 L31.19 18.91 L32.13 19.38 L33.78 17.50 L36.40 20.12 L34.52 21.77 Z M32.11 25.40 A3.61 3.61 0 1 0 24.89 25.40 A3.61 3.61 0 1 0 32.11 25.40 Z" fill="#a9bdd6" fill-rule="evenodd"/></svg>
<div class="t" style="left:1355.00px;width:400px;text-align:center;top:187.34px;font-size:10px;line-height:10px;color:#8c8c8c;">Einstellungen</div>
<svg style="position:absolute;left:1515px;top:221px;" width="10" height="14" viewBox="0 0 10 14"><path d="M7 1.5 L2 6.8 L7 12" fill="none" stroke="#7a7a7a" stroke-width="1.4"/></svg>
<svg style="position:absolute;left:1540px;top:222px;" width="32" height="26" viewBox="0 0 32 26">
<path d="M9 2.3 H28 V21.3 H9 L2 11.8 Z" fill="#a9bdd6"/>
<circle cx="12.5" cy="9.5" r="1.7" fill="#ffffff"/><circle cx="17" cy="9.5" r="1.7" fill="#ffffff"/>
<circle cx="20.5" cy="18.3" r="7" fill="#ffffff"/>
<path d="M23.92 16.88 L24.09 17.41 L25.40 17.32 L25.40 19.28 L24.09 19.19 L23.92 19.72 L23.67 20.21 L24.66 21.08 L23.28 22.46 L22.41 21.47 L21.92 21.72 L21.39 21.89 L21.48 23.20 L19.52 23.20 L19.61 21.89 L19.08 21.72 L18.59 21.47 L17.72 22.46 L16.34 21.08 L17.33 20.21 L17.08 19.72 L16.91 19.19 L15.60 19.28 L15.60 17.32 L16.91 17.41 L17.08 16.88 L17.33 16.39 L16.34 15.52 L17.72 14.14 L18.59 15.13 L19.08 14.88 L19.61 14.71 L19.52 13.40 L21.48 13.40 L21.39 14.71 L21.92 14.88 L22.41 15.13 L23.28 14.14 L24.66 15.52 L23.67 16.39 Z M22.40 18.30 A1.90 1.90 0 1 0 18.60 18.30 A1.90 1.90 0 1 0 22.40 18.30 Z" fill="#e8954e" fill-rule="evenodd"/></svg>
<div class="t" style="left:1355.00px;width:400px;text-align:center;top:256.54px;font-size:10px;line-height:10px;color:#8c8c8c;">Extras</div>
<svg style="position:absolute;left:1542px;top:289px;" width="25" height="30" viewBox="0 0 25 30">
<path d="M5.2 9 Q5.2 7.2 6.6 7.2 Q8 7.2 8 9 V16 H8.6 V3.5 Q8.6 1.8 10 1.8 Q11.4 1.8 11.4 3.5 V16 H12 V4.8 Q12 3.1 13.4 3.1 Q14.8 3.1 14.8 4.8 V16 H15.4 V7.5 Q15.4 5.8 16.8 5.8 Q18.2 5.8 18.2 7.5 V20.5 Q18.2 28.3 11 28.3 Q6.5 28.3 4.3 24.5 L2 19 Q1.5 17.5 2.8 17 Q4 16.6 4.7 17.8 L5.2 19 Z" fill="#a9bdd6"/>
</svg>
<div class="t" style="left:1355.00px;width:400px;text-align:center;top:325.54px;font-size:10px;line-height:10px;color:#8c8c8c;">Handverstellun-</div>
<div class="t" style="left:1355.00px;width:400px;text-align:center;top:336.54px;font-size:10px;line-height:10px;color:#8c8c8c;">gen</div>
<svg style="position:absolute;left:1515px;top:841.5px;" width="10" height="14" viewBox="0 0 10 14"><path d="M7 1.5 L2 6.8 L7 12" fill="none" stroke="#7a7a7a" stroke-width="1.4"/></svg>
<svg style="position:absolute;left:1540px;top:841px;" width="30" height="30" viewBox="0 0 30 30"><circle cx="14.7" cy="15" r="13" fill="#b4c6de"/></svg>
<div class="t" style="left:1355.00px;width:400px;text-align:center;top:848.42px;font-size:19px;line-height:19px;color:#f7d3a6;font-weight:bold;">?</div>
<div class="t" style="left:1355.00px;width:400px;text-align:center;top:877.83px;font-size:10px;line-height:10px;color:#8c8c8c;">Hilfe</div>
<div style="position:absolute;left:503.5px;top:184.7px;width:666px;height:559.3px;background:#ffffff;box-shadow:0 2px 11px rgba(0,0,0,0.30);"></div>
<div style="position:absolute;left:503.5px;top:184.7px;width:666px;height:46px;background:#7393bb;"></div>
<div class="t" style="left:515.68px;top:199.27px;font-size:20px;line-height:20px;color:#ffffff;transform:scaleX(1.0099);transform-origin:0 0;">Kantenreservierung</div>
<svg style="position:absolute;left:1130px;top:193px;" width="32" height="32" viewBox="0 0 32 32"><path d="M3.5 3.5 L28 28 M28 3.5 L3.5 28" stroke="#ffffff" stroke-width="4"/></svg>
<svg style="position:absolute;left:517.1px;top:242.5px;" width="60" height="60" viewBox="0 0 60 60">
<filter id="fw" x="0" y="0" width="100%" height="100%" color-interpolation-filters="sRGB">
<feTurbulence type="fractalNoise" baseFrequency="0.035 0.32" numOctaves="3" seed="7"/>
<feColorMatrix type="matrix" values="0.85 0 0 0 0.12  0.85 0 0 0 0.05  0.85 0 0 0 -0.04  0 0 0 0 1"/>
</filter>
<rect x="0" y="0" width="60" height="60" filter="url(#fw)"/>
</svg>
<div class="t" style="left:590.70px;top:248.04px;font-size:12px;line-height:12px;color:#141414;transform:scaleX(1.0468);transform-origin:0 0;">ABS_Altholz_grau_2.00_23.0_ZJ</div>
<div class="t" style="left:590.50px;top:264.16px;font-size:9.5px;line-height:9.5px;color:#141414;transform:scaleX(1.0637);transform-origin:0 0;">Altholz grau</div>
<div class="t" style="left:589.99px;top:275.26px;font-size:9.5px;line-height:9.5px;color:#141414;transform:scaleX(1.0697);transform-origin:0 0;">2.00 x 23.0 mm</div>
<div class="t" style="left:590.50px;top:285.56px;font-size:9.5px;line-height:9.5px;color:#141414;transform:scaleX(1.0609);transform-origin:0 0;">ABS zero-joint</div>
<div class="t" style="left:968.59px;top:246.04px;font-size:12px;line-height:12px;color:#141414;transform:scaleX(1.0485);transform-origin:0 0;">Länge Gesamtbestand</div>
<div class="t" style="left:1107.16px;top:246.04px;font-size:12px;line-height:12px;color:#141414;transform:scaleX(1.0632);transform-origin:0 0;">260 m</div>
<div class="t" style="left:968.59px;top:260.04px;font-size:12px;line-height:12px;color:#141414;transform:scaleX(1.0474);transform-origin:0 0;">Länge reserviert</div>
<div class="t" style="left:1107.16px;top:260.04px;font-size:12px;line-height:12px;color:#141414;transform:scaleX(1.0632);transform-origin:0 0;">225 m</div>
<div class="t" style="left:968.59px;top:274.04px;font-size:12px;line-height:12px;color:#141414;transform:scaleX(1.0478);transform-origin:0 0;">Länge verfügbar</div>
<div class="t" style="left:1107.36px;top:274.04px;font-size:12px;line-height:12px;color:#141414;transform:scaleX(1.0588);transform-origin:0 0;">35 m</div>
<div class="t" style="left:524.09px;top:337.04px;font-size:10px;line-height:10px;color:#1a1a1a;transform:scaleX(1.0164);transform-origin:0 0;">Reservierung</div>
<div class="t" style="left:620.98px;top:337.04px;font-size:10px;line-height:10px;color:#1a1a1a;transform:scaleX(1.0231);transform-origin:0 0;">Projekt</div>
<div class="t" style="left:719.89px;top:337.04px;font-size:10px;line-height:10px;color:#1a1a1a;transform:scaleX(1.0114);transform-origin:0 0;">Reservierte Menge</div>
<div class="t" style="left:818.78px;top:337.04px;font-size:10px;line-height:10px;color:#1a1a1a;transform:scaleX(1.0238);transform-origin:0 0;">Ersteller</div>
<div class="t" style="left:919.19px;top:337.04px;font-size:10px;line-height:10px;color:#1a1a1a;transform:scaleX(1.0152);transform-origin:0 0;">Erstellungsdatum</div>
<div class="t" style="left:1018.10px;top:337.04px;font-size:10px;line-height:10px;color:#1a1a1a;transform:scaleX(1.0049);transform-origin:0 0;">Kommentar</div>
<div class="t" style="left:1090.55px;top:338.24px;font-size:10px;line-height:10px;color:#1a1a1a;transform:scaleX(0.9927);transform-origin:0 0;">Start</div>
<div style="position:absolute;left:517.8px;top:363.6px;width:615.7px;height:1.3px;background:#b6b6b6;"></div>
<div class="t" style="left:524.10px;top:383.50px;font-size:13px;line-height:13px;color:#141414;transform:scaleX(1.0533);transform-origin:0 0;">Maier</div>
<div class="t" style="left:620.22px;top:383.50px;font-size:13px;line-height:13px;color:#141414;transform:scaleX(1.0340);transform-origin:0 0;">Badezimmer</div>
<div class="t" style="left:719.96px;top:383.50px;font-size:13px;line-height:13px;color:#141414;transform:scaleX(1.0335);transform-origin:0 0;">56,3 m</div>
<div class="t" style="left:806.90px;top:383.50px;font-size:13px;line-height:13px;color:#141414;transform:scaleX(1.0325);transform-origin:0 0;">Stefan Waldherr</div>
<div class="t" style="left:919.03px;top:383.50px;font-size:13px;line-height:13px;color:#141414;transform:scaleX(1.0345);transform-origin:0 0;">06.02.2025</div>
<div class="t" style="left:1019.20px;top:383.50px;font-size:13px;line-height:13px;color:#141414;">-</div>
<div style="position:absolute;left:517.8px;top:413.6px;width:615.7px;height:1.3px;background:#c2c2c2;"></div>
<svg style="position:absolute;left:1090px;top:376.8px;" width="26" height="26" viewBox="0 0 26 26"><circle cx="13" cy="13" r="11.6" fill="#ffffff" stroke="#6f90bd" stroke-width="1.3"/><path d="M9.5 7.3 L18.3 13 L9.5 18.7 Z" fill="#d36f1f"/></svg>
<div class="t" style="left:524.11px;top:433.50px;font-size:13px;line-height:13px;color:#141414;transform:scaleX(1.0500);transform-origin:0 0;">Müller</div>
<div class="t" style="left:620.23px;top:433.50px;font-size:13px;line-height:13px;color:#141414;transform:scaleX(1.0303);transform-origin:0 0;">Büroschrank</div>
<div class="t" style="left:719.47px;top:433.50px;font-size:13px;line-height:13px;color:#141414;transform:scaleX(1.0566);transform-origin:0 0;">110,0 m</div>
<div class="t" style="left:807.23px;top:433.50px;font-size:13px;line-height:13px;color:#141414;transform:scaleX(1.0216);transform-origin:0 0;">Thomas Ludwig</div>
<div class="t" style="left:919.03px;top:433.50px;font-size:13px;line-height:13px;color:#141414;transform:scaleX(1.0345);transform-origin:0 0;">09.02.2025</div>
<div class="t" style="left:1019.20px;top:433.50px;font-size:13px;line-height:13px;color:#141414;">-</div>
<div style="position:absolute;left:517.8px;top:463.6px;width:615.7px;height:1.3px;background:#c2c2c2;"></div>
<svg style="position:absolute;left:1090px;top:426.8px;" width="26" height="26" viewBox="0 0 26 26"><circle cx="13" cy="13" r="11.6" fill="#ffffff" stroke="#6f90bd" stroke-width="1.3"/><path d="M9.5 7.3 L18.3 13 L9.5 18.7 Z" fill="#d36f1f"/></svg>
<div class="t" style="left:524.60px;top:483.50px;font-size:13px;line-height:13px;color:#199ad6;transform:scaleX(1.0327);transform-origin:0 0;">Schmitt</div>
<div class="t" style="left:620.69px;top:483.50px;font-size:13px;line-height:13px;color:#199ad6;transform:scaleX(1.0360);transform-origin:0 0;">Sideboard</div>
<div class="t" style="left:719.83px;top:483.50px;font-size:13px;line-height:13px;color:#199ad6;transform:scaleX(1.0364);transform-origin:0 0;">2,4 m</div>
<div class="t" style="left:807.30px;top:483.50px;font-size:13px;line-height:13px;color:#199ad6;transform:scaleX(1.0213);transform-origin:0 0;">Jürgen Englert</div>
<div class="t" style="left:918.47px;top:483.50px;font-size:13px;line-height:13px;color:#199ad6;transform:scaleX(1.0592);transform-origin:0 0;">11.03.2025</div>
<div class="t" style="left:1019.20px;top:483.50px;font-size:13px;line-height:13px;color:#199ad6;">-</div>
<div style="position:absolute;left:517.8px;top:513.6px;width:615.7px;height:1.3px;background:#c2c2c2;"></div>
<svg style="position:absolute;left:1090px;top:476.8px;" width="26" height="26" viewBox="0 0 26 26"><circle cx="13" cy="13" r="11.6" fill="#ffffff" stroke="#6f90bd" stroke-width="1.3"/><path d="M9.5 7.3 L18.3 13 L9.5 18.7 Z" fill="#d36f1f"/></svg>
<div class="t" style="left:524.60px;top:533.50px;font-size:13px;line-height:13px;color:#141414;transform:scaleX(1.0310);transform-origin:0 0;">Ohne Reservierung</div>
<div class="t" style="left:720.03px;top:533.50px;font-size:13px;line-height:13px;color:#141414;transform:scaleX(1.0317);transform-origin:0 0;">35,0 m</div>
<div style="position:absolute;left:517.8px;top:563.6px;width:615.7px;height:1.3px;background:#c2c2c2;"></div>
<svg style="position:absolute;left:1090px;top:526.8px;" width="26" height="26" viewBox="0 0 26 26"><circle cx="13" cy="13" r="11.6" fill="#ffffff" stroke="#6f90bd" stroke-width="1.3"/><path d="M9.5 7.3 L18.3 13 L9.5 18.7 Z" fill="#d36f1f"/></svg>
<div style="position:absolute;left:1148px;top:365.5px;width:7px;height:267.5px;background:#c2c2c2;"></div>
<div style="position:absolute;left:503.5px;top:686.7px;width:666px;height:57.3px;background:#e6eaed;"></div>
<div style="position:absolute;left:510.4px;top:692.7px;width:211.8px;height:46.8px;background:#e5e9ed;box-sizing:border-box;border-top:1px solid #c5c9cd;border-left:1px solid #c5c9cd;border-right:2px solid #5a5a5a;border-bottom:2px solid #5a5a5a;border-radius:1px;"></div>
<svg style="position:absolute;left:519px;top:697px;" width="38" height="38" viewBox="0 0 38 38"><circle cx="18.8" cy="18.6" r="16.5" fill="none" stroke="#5b86bf" stroke-width="1.5"/><path d="M13 10.5 L26 18.6 L13 26.7 Z" fill="#d36f1f" stroke="#d36f1f" stroke-width="1.5" stroke-linejoin="round"/></svg>
<div class="t" style="left:573.32px;top:708.57px;font-size:13.5px;line-height:13.5px;color:#141414;transform:scaleX(1.0001);transform-origin:0 0;">Reservierung starten</div>
<div style="position:absolute;left:1022.7px;top:691.8px;width:138px;height:47.1px;background:#e5e9ed;box-sizing:border-box;border-top:1px solid #c5c9cd;border-left:1px solid #c5c9cd;border-right:2px solid #5a5a5a;border-bottom:2px solid #5a5a5a;border-radius:1px;"></div>
<svg style="position:absolute;left:1028px;top:698px;" width="36" height="34" viewBox="0 0 36 34"><path d="M3.5 3 L31.5 31 M31.5 3 L3.5 31" stroke="#6a8db8" stroke-width="3.2"/></svg>
<div class="t" style="left:1081.10px;top:708.17px;font-size:13.5px;line-height:13.5px;color:#141414;transform:scaleX(0.9928);transform-origin:0 0;">Abbrechen</div>
</body></html>
